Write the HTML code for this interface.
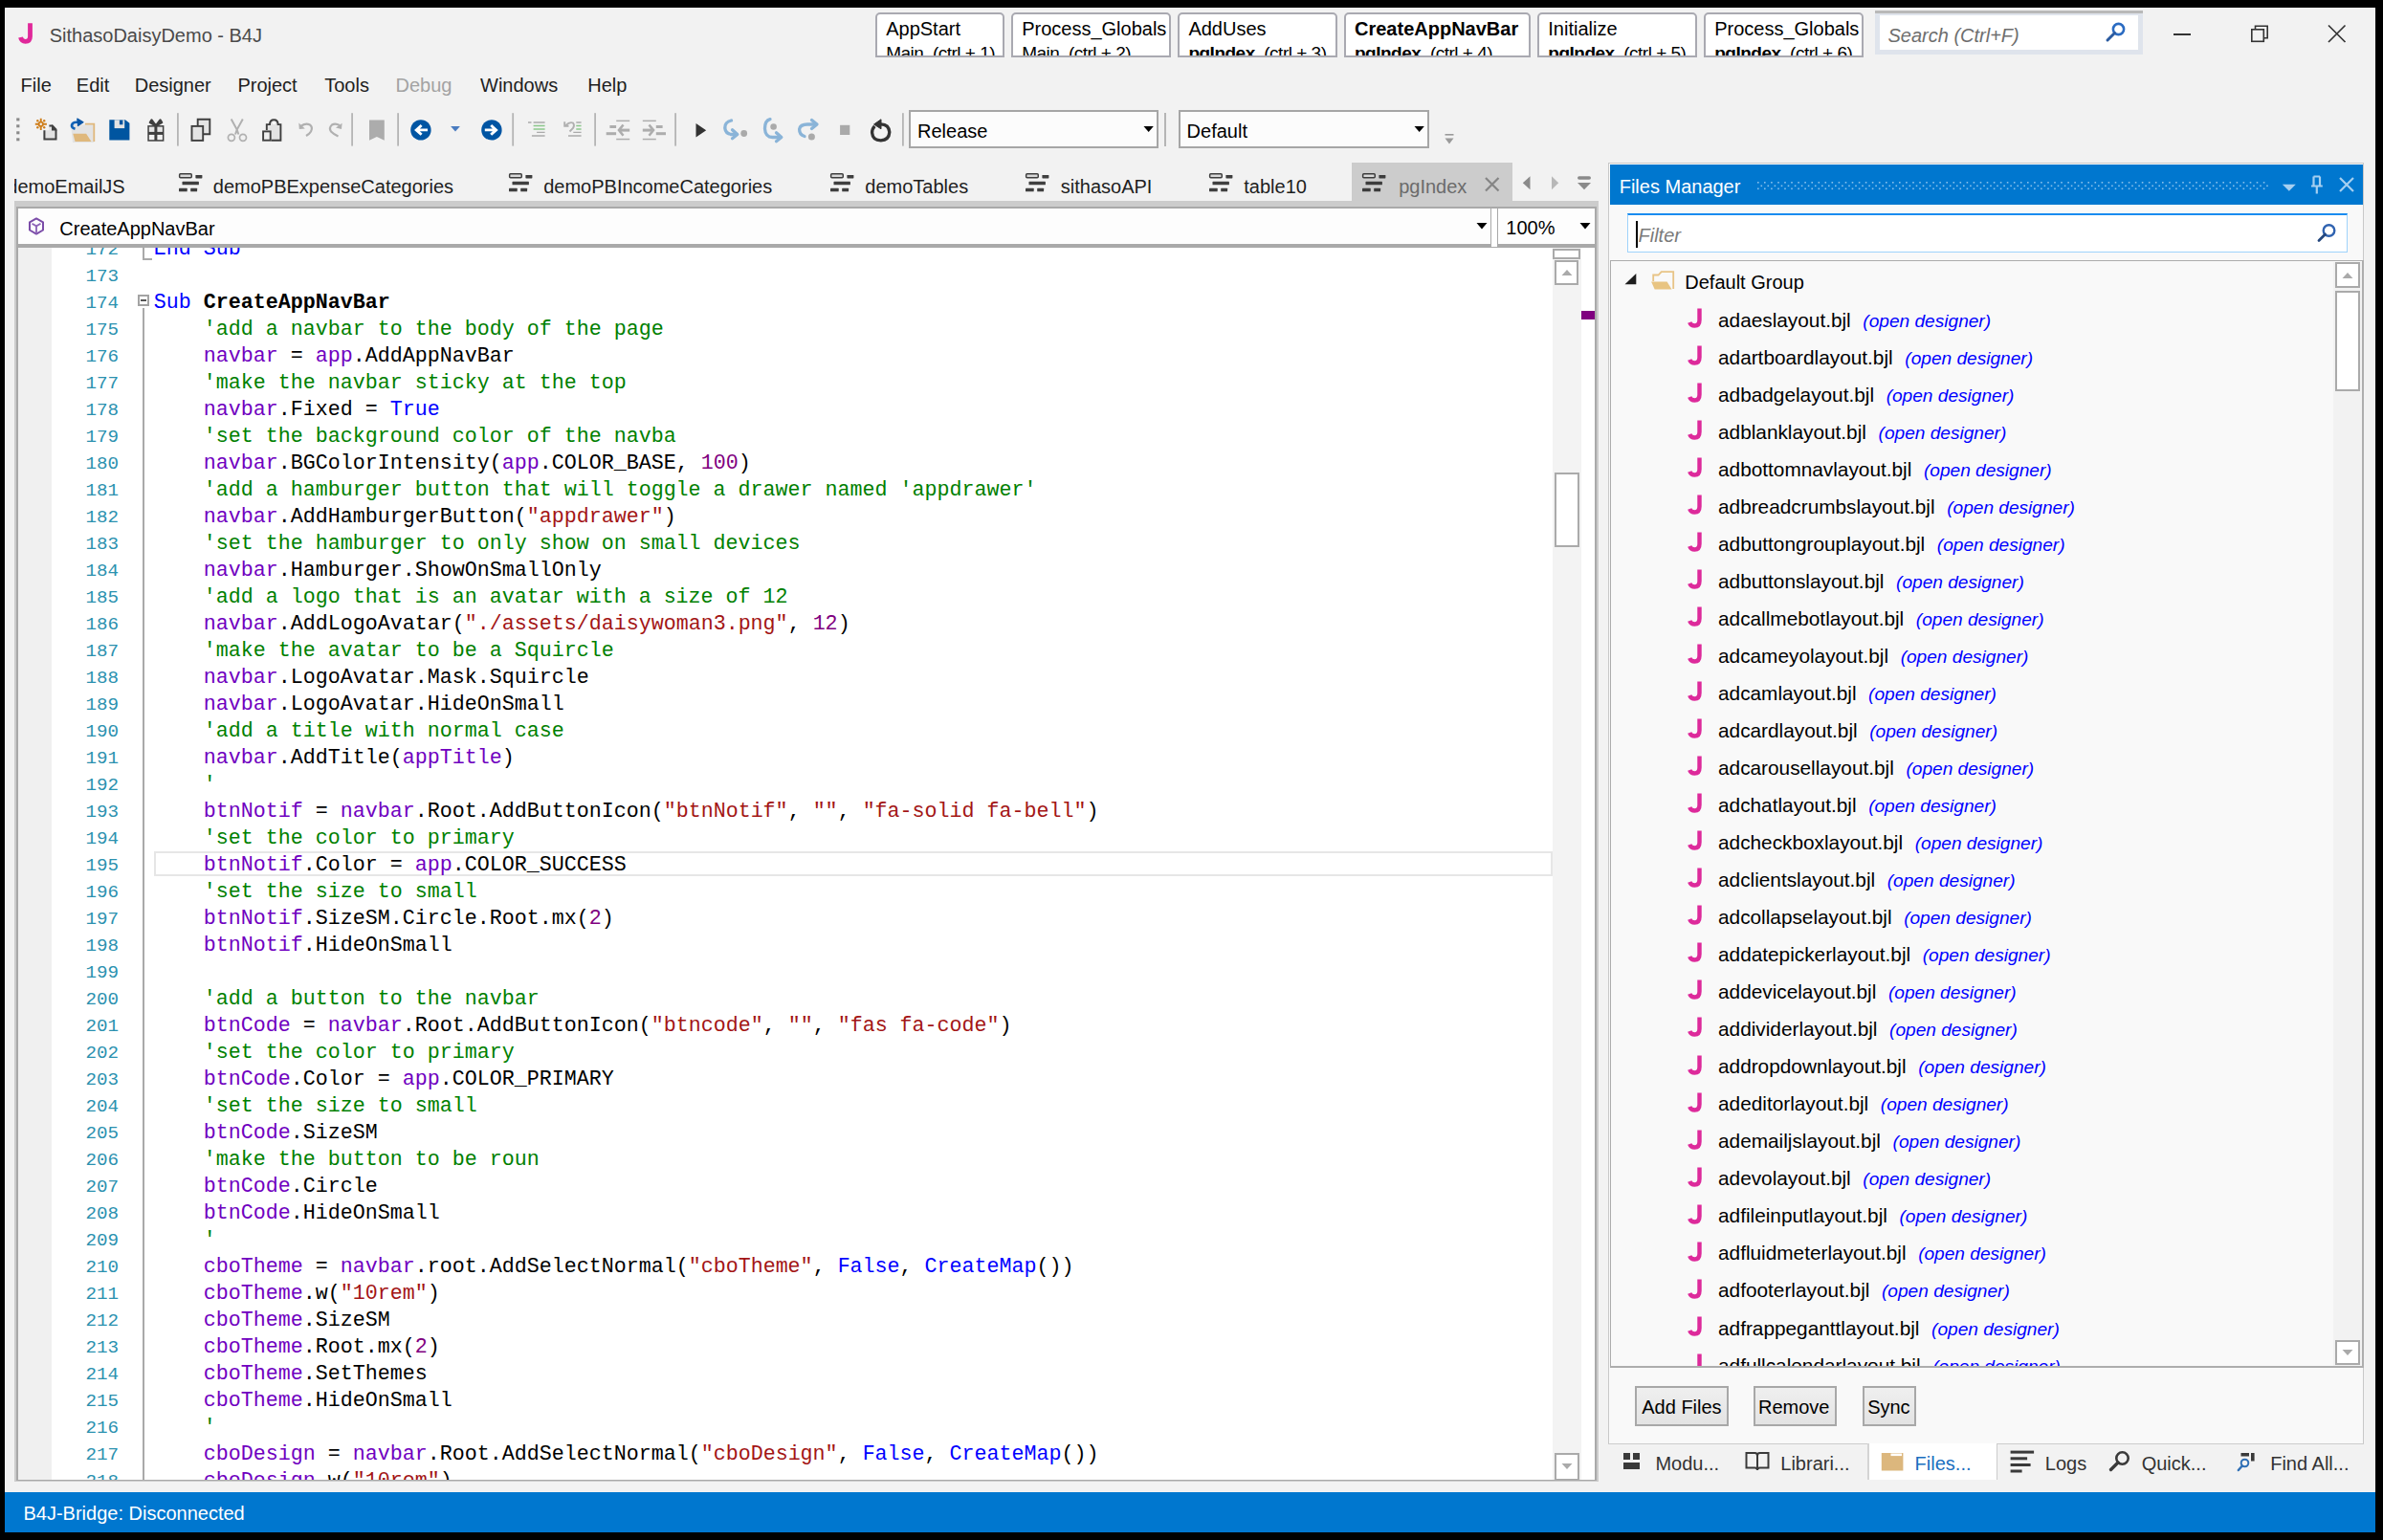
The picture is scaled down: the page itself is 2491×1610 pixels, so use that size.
<!DOCTYPE html>
<html><head><meta charset="utf-8"><title>B4J</title><style>
*{margin:0;padding:0}
html,body{width:2491px;height:1610px;overflow:hidden;background:#000}
body{position:relative;font-family:"Liberation Sans", sans-serif}
.r{position:absolute;display:block}
.t{position:absolute;white-space:nowrap}
.ftab{background:#fff;border:2px solid #a9a9b1;border-radius:5px 5px 0 0;box-sizing:border-box;overflow:hidden}
#win{position:absolute;left:5px;top:8px;width:2478px;height:1594px;background:#f2f2f2;overflow:hidden}
</style></head><body>
<div id="win"></div>
<div class="r" style="left:5px;top:8px;width:2478px;height:1px;background:#fff"></div>
<div class="r" style="left:5px;top:8px;width:1px;height:1552px;background:#fff"></div>
<div class="r" style="left:2482px;top:8px;width:1px;height:1552px;background:#fff"></div>
<svg class="r" style="left:15.00px;top:22.00px;" width="24" height="26" viewBox="15 22 24 26"><path d="M31.5 24.2 V38 Q31.5 43.3 26.5 43.3 Q22.5 43.3 21.5 39" fill="none" stroke="#e0289a" stroke-width="4.8"/></svg>
<div class="t" style="left:51.70px;top:25.17px;font-size:20px;line-height:25.0px;color:#4a4a4a;">SithasoDaisyDemo - B4J</div>
<div class="r ftab" style="left:915.2px;top:12.5px;width:134.4px;height:47px"><div class="t" style="left:9.00px;top:3.77px;font-size:20px;line-height:25.0px;color:#000;">AppStart</div><div class="t" style="left:9.00px;top:29.04px;font-size:19px;line-height:23.75px;color:#000;letter-spacing:-0.5px;">Main&nbsp; (ctrl + 1)</div></div>
<div class="r ftab" style="left:1057.2px;top:12.5px;width:166.8px;height:47px"><div class="t" style="left:9.00px;top:3.77px;font-size:20px;line-height:25.0px;color:#000;">Process_Globals</div><div class="t" style="left:9.00px;top:29.04px;font-size:19px;line-height:23.75px;color:#000;letter-spacing:-0.5px;">Main&nbsp; (ctrl + 2)</div></div>
<div class="r ftab" style="left:1231.4px;top:12.5px;width:166.2px;height:47px"><div class="t" style="left:9.00px;top:3.77px;font-size:20px;line-height:25.0px;color:#000;">AddUses</div><div class="t" style="left:9.00px;top:29.04px;font-size:19px;line-height:23.75px;color:#000;letter-spacing:-0.5px;"><b>pgIndex</b>&nbsp; (ctrl + 3)</div></div>
<div class="r ftab" style="left:1405px;top:12.5px;width:194.8px;height:47px"><div class="t" style="left:9.00px;top:3.77px;font-size:20px;line-height:25.0px;color:#000;font-weight:700;">CreateAppNavBar</div><div class="t" style="left:9.00px;top:29.04px;font-size:19px;line-height:23.75px;color:#000;letter-spacing:-0.5px;"><b>pgIndex</b>&nbsp; (ctrl + 4)</div></div>
<div class="r ftab" style="left:1607.3px;top:12.5px;width:166.4px;height:47px"><div class="t" style="left:9.00px;top:3.77px;font-size:20px;line-height:25.0px;color:#000;">Initialize</div><div class="t" style="left:9.00px;top:29.04px;font-size:19px;line-height:23.75px;color:#000;letter-spacing:-0.5px;"><b>pgIndex</b>&nbsp; (ctrl + 5)</div></div>
<div class="r ftab" style="left:1781.2px;top:12.5px;width:166.4px;height:47px"><div class="t" style="left:9.00px;top:3.77px;font-size:20px;line-height:25.0px;color:#000;">Process_Globals</div><div class="t" style="left:9.00px;top:29.04px;font-size:19px;line-height:23.75px;color:#000;letter-spacing:-0.5px;"><b>pgIndex</b>&nbsp; (ctrl + 6)</div></div>
<div class="r" style="left:1960.00px;top:11.00px;width:280.00px;height:46.00px;background:#dfe4ec;"></div>
<div class="r" style="left:1960.00px;top:11.00px;width:280.00px;height:3.00px;background:#b9b9b9;"></div>
<div class="r" style="left:1965.00px;top:15.70px;width:270.30px;height:36.30px;background:#ffffff;"></div>
<div class="t" style="left:1973.50px;top:24.57px;font-size:20px;line-height:25.0px;color:#6e6e6e;font-style:italic;">Search (Ctrl+F)</div>
<svg class="r" style="left:2199.00px;top:22.00px;" width="26" height="24" viewBox="0 0 26 24"><circle cx="15.5" cy="8.5" r="5.6" fill="none" stroke="#2a6bc2" stroke-width="2.6"/><path d="M11.5 12.5 L4 20" stroke="#2a5aa0" stroke-width="3" stroke-linecap="round"/></svg>
<div class="r" style="left:2271.80px;top:35.00px;width:17.80px;height:1.60px;background:#333;"></div>
<svg class="r" style="left:2350.00px;top:24.00px;" width="24" height="22" viewBox="0 0 24 22"><rect x="3.8" y="6.8" width="12.5" height="12.5" fill="none" stroke="#333" stroke-width="1.6"/><path d="M7.5 6.8 V3.2 H20.2 V15.8 H16.3" fill="none" stroke="#333" stroke-width="1.6"/></svg>
<svg class="r" style="left:2431.00px;top:24.00px;" width="24" height="22" viewBox="0 0 24 22"><path d="M3 2.5 L20.5 20 M20.5 2.5 L3 20" stroke="#333" stroke-width="1.7"/></svg>
<div class="t" style="left:21.60px;top:76.57px;font-size:20px;line-height:25.0px;color:#1e1e1e;">File</div>
<div class="t" style="left:79.80px;top:76.57px;font-size:20px;line-height:25.0px;color:#1e1e1e;">Edit</div>
<div class="t" style="left:140.70px;top:76.57px;font-size:20px;line-height:25.0px;color:#1e1e1e;">Designer</div>
<div class="t" style="left:248.40px;top:76.57px;font-size:20px;line-height:25.0px;color:#1e1e1e;">Project</div>
<div class="t" style="left:339.20px;top:76.57px;font-size:20px;line-height:25.0px;color:#1e1e1e;">Tools</div>
<div class="t" style="left:413.50px;top:76.57px;font-size:20px;line-height:25.0px;color:#a3a3a3;">Debug</div>
<div class="t" style="left:502.00px;top:76.57px;font-size:20px;line-height:25.0px;color:#1e1e1e;">Windows</div>
<div class="t" style="left:614.20px;top:76.57px;font-size:20px;line-height:25.0px;color:#1e1e1e;">Help</div>
<svg class="r" style="left:0;top:110px" width="960" height="50" viewBox="0 110 960 50"><rect x="17.2" y="123.4" width="3.2" height="3" fill="#8a8a8a"/><rect x="17.2" y="130.3" width="3.2" height="3" fill="#8a8a8a"/><rect x="17.2" y="137.3" width="3.2" height="3" fill="#8a8a8a"/><rect x="17.2" y="144.3" width="3.2" height="3" fill="#8a8a8a"/><g stroke="#cf7f1c" stroke-width="1.9" fill="none"><path d="M42.75 123.8 V127.4 M42.75 132.2 V135.9 M36.8 129.8 H40.4 M45.1 129.8 H48.9"/><circle cx="42.75" cy="129.8" r="2.2"/></g><g fill="#cf7f1c"><circle cx="39.3" cy="126.3" r="1.2"/><circle cx="46.2" cy="126.3" r="1.2"/><circle cx="39.3" cy="133.3" r="1.2"/><circle cx="46.2" cy="133.3" r="1.2"/></g><path d="M46.4 136.3 V145.5 H58.5 V136 L54.9 131.4 H51.4 V136.3 Z" fill="#e2e2e2"/><path d="M46.4 136.3 V145.5 H58.5 V136 M51.4 131.4 H54.9" fill="none" stroke="#404040" stroke-width="2"/><path d="M54 130.4 H55.3 L59.5 135 V136.6 H54 Z" fill="#404040"/><path d="M74 130.3 H98.3 V149 H76 Z" fill="#e3e3e3"/><path d="M88.9 129.6 H98.3 V147.9" fill="none" stroke="#e0b87c" stroke-width="1.8"/><path d="M76.3 139.7 H90.1 L95.5 147.9 H78.5 Z" fill="#dfb87c"/><path d="M78.5 134.8 Q74.5 133.5 75 130.8 Q75.8 127.8 80 127.8 H84" fill="none" stroke="#1262b5" stroke-width="2.6"/><path d="M80.8 124 L87 127.8 L81.5 131.5 Z" fill="#0b56a6" stroke="#0b56a6" stroke-width="1.2" stroke-linejoin="round"/><path d="M114.3 125.3 H130.9 L135.4 128.8 V146.4 H114.3 Z" fill="#0055a0"/><rect x="119.6" y="125.3" width="10.6" height="8.8" fill="#e4e4e4"/><rect x="124.9" y="125.6" width="3.5" height="4.7" fill="#0055a0"/><rect x="154.3" y="131.1" width="17.1" height="16.6" fill="#3f3f3f"/><rect x="155.8" y="132.6" width="5.6" height="5.3" fill="#e6e6e6"/><rect x="164.4" y="132.6" width="5.5" height="5.3" fill="#e6e6e6"/><rect x="155.8" y="140.9" width="5.6" height="5.3" fill="#f2f2f2"/><rect x="164.4" y="140.9" width="5.5" height="5.3" fill="#f2f2f2"/><path d="M162.9 131.5 L158.5 125.3 L156.8 128 Z M162.9 131.5 L167.5 125.3 L169.2 128 Z" fill="#3f3f3f" stroke="#3f3f3f" stroke-width="2.2" stroke-linejoin="round"/><rect x="185.0" y="118.2" width="1.8" height="34.4" fill="#b5b5b5"/><rect x="367.2" y="118.2" width="1.8" height="34.4" fill="#b5b5b5"/><rect x="415.2" y="118.2" width="1.8" height="34.4" fill="#b5b5b5"/><rect x="535.3" y="118.2" width="1.8" height="34.4" fill="#b5b5b5"/><rect x="621.2" y="118.2" width="1.8" height="34.4" fill="#b5b5b5"/><rect x="705.2" y="118.2" width="1.8" height="34.4" fill="#b5b5b5"/><rect x="943.0" y="118.2" width="1.8" height="34.4" fill="#b5b5b5"/><rect x="1217.0" y="118.2" width="1.8" height="34.4" fill="#b5b5b5"/><path d="M206.7 131 V124.8 H219.3 V140.2 H213" fill="#e4e4e4" stroke="#3f3f3f" stroke-width="1.9"/><rect x="200.5" y="131.9" width="11.7" height="15" fill="#e4e4e4" stroke="#3f3f3f" stroke-width="1.9"/><path d="M241.7 124.4 L247.7 135.5 L246 140.5 M253.8 124.4 L247.7 135.5 L249.4 140.5" fill="none" stroke="#b0b0b0" stroke-width="2"/><circle cx="241.9" cy="143.8" r="3.5" fill="none" stroke="#b0b0b0" stroke-width="1.7"/><circle cx="254" cy="143.8" r="3.5" fill="none" stroke="#b0b0b0" stroke-width="1.7"/><path d="M278.8 136 V130.1 H282 Q282 125.2 286.3 125.2 Q290.6 125.2 290.6 130.1 H293.4 V146.7 H283.6" fill="#e3e3e3" stroke="#3f3f3f" stroke-width="1.9"/><circle cx="286.3" cy="128.4" r="1.5" fill="#fff"/><rect x="275.1" y="137.4" width="7.6" height="9.3" fill="#eeeeee" stroke="#3f3f3f" stroke-width="1.9"/><path d="M315 131.5 Q319.5 128.5 323.5 130.2 Q327.5 133 325 137.5 Q323.5 140 320 142" fill="none" stroke="#b0b0b0" stroke-width="2.2"/><path d="M312.3 128.6 L312.8 135 L318.8 134.5 Z" fill="#b0b0b0"/><path d="M355 131 Q350.5 128.5 347 130.5 Q343.5 133.5 346 137.5 Q349 140.5 353.5 142.5" fill="none" stroke="#b0b0b0" stroke-width="2.2"/><path d="M357.6 128.8 L357 135 L351 133.5 Z" fill="#b0b0b0"/><path d="M386 125.6 H401.8 V146.7 L393.9 142.9 L386 146.7 Z" fill="#acacac"/><circle cx="439.9" cy="135.9" r="10.7" fill="#0055a3"/><path d="M447 135.9 H435.5 M440.6 131 L435.2 135.9 L440.6 140.8" fill="none" stroke="#fff" stroke-width="2.9"/><path d="M471.1 132.1 H480.9 L476 137.6 Z" fill="#4a7cc0"/><circle cx="513.9" cy="135.9" r="10.7" fill="#0055a3"/><path d="M506.8 135.9 H518.3 M513.2 131 L518.6 135.9 L513.2 140.8" fill="none" stroke="#fff" stroke-width="2.9"/><g stroke-width="1.4"><path d="M552 128 H555.5 M557.6 128 H569.6 M561.1 138.4 H569.6 M555.9 142 H569.6" stroke="#aaaaaa"/><path d="M557.6 131.5 H569.6 M557.6 135 H569.6" stroke="#8cc78c"/></g><g stroke-width="1.4"><path d="M602.3 128 H607.6 M599.3 138.4 H607.6 M594 142 H607.6" stroke="#aaaaaa"/><path d="M602.3 131.5 H607.6 M602.3 135 H607.6" stroke="#8cc78c"/></g><path d="M591.5 131 Q595.5 127 599 128.5 Q601 131 599 134 L595.5 137.5" fill="none" stroke="#b0b0b0" stroke-width="1.9"/><path d="M590.2 127.3 V131.8 H594.5" fill="none" stroke="#b0b0b0" stroke-width="1.9"/><g fill="#adadad"><rect x="644.2" y="125.6" width="14" height="1.5"/><rect x="644.2" y="144.8" width="14" height="1.5"/><rect x="637.4" y="131" width="6.7" height="3"/><rect x="633.7" y="138.2" width="10.4" height="3"/><rect x="648" y="134.6" width="10.2" height="3"/></g><path d="M651.5 130.5 L647 136.1 L651.5 141.7" fill="none" stroke="#adadad" stroke-width="2.6"/><g fill="#adadad"><rect x="671.8" y="125.6" width="14" height="1.5"/><rect x="671.8" y="144.8" width="14" height="1.5"/><rect x="685.8" y="131" width="6.8" height="3"/><rect x="685.8" y="138.2" width="10.2" height="3"/><rect x="671.8" y="134.6" width="10" height="3"/></g><path d="M678.5 130.5 L683 136.1 L678.5 141.7" fill="none" stroke="#adadad" stroke-width="2.6"/><path d="M727.5 128.9 L738.2 136.2 L727.5 143.4 Z" fill="#333"/><path d="M764.5 126 Q757.5 127.5 757.8 134 Q758.5 140.5 766 140.5 H769" fill="none" stroke="#8ab4d8" stroke-width="3.3" stroke-linecap="round" stroke-linejoin="round"/><path d="M765.5 135.8 L770.8 140.5 L765.5 144.8" fill="none" stroke="#8ab4d8" stroke-width="3.3" stroke-linecap="round" stroke-linejoin="round"/><circle cx="777.7" cy="139.5" r="3.4" fill="#aaaaaa"/><path d="M805 124.6 Q799.5 126 799.5 134.5 Q800 143.5 807.5 143.5 H814" fill="none" stroke="#8ab4d8" stroke-width="3.3" stroke-linecap="round" stroke-linejoin="round"/><path d="M811.5 138.8 L816.8 143.5 L811.5 147.8" fill="none" stroke="#8ab4d8" stroke-width="3.3" stroke-linecap="round" stroke-linejoin="round"/><circle cx="808.6" cy="132.5" r="3.3" fill="#aaaaaa"/><path d="M841 142.5 Q835.5 141 835.6 135 Q836.5 130 844 130 H851" fill="none" stroke="#8ab4d8" stroke-width="3.3" stroke-linecap="round" stroke-linejoin="round"/><path d="M848.5 125.5 L854 130 L848.5 134.5" fill="none" stroke="#8ab4d8" stroke-width="3.3" stroke-linecap="round" stroke-linejoin="round"/><circle cx="848.4" cy="142.9" r="3.5" fill="#aaaaaa"/><rect x="878.1" y="130.8" width="10.2" height="10.2" fill="#aaaaaa"/><path d="M914.3 131.8 Q911.5 134.8 911.6 138.8 Q912.3 146.6 920.8 146.8 Q929.3 146.6 929.8 138.2 Q929.3 130 920.8 129.8 H919.5" fill="none" stroke="#333" stroke-width="3.3"/><path d="M921 124.8 L913.5 130 L921 134.8 Z" fill="#333" stroke="#333" stroke-width="1" stroke-linejoin="round"/></svg>
<div class="r" style="left:950.40px;top:115.40px;width:261.00px;height:39.80px;background:#fcfcfc;border:2px solid #a6a6a6;box-sizing:border-box;"></div>
<div class="t" style="left:959.00px;top:125.37px;font-size:20px;line-height:25.0px;color:#000;">Release</div>
<svg class="r" style="left:1195.40px;top:131.00px;" width="12" height="8" viewBox="0 0 12 8"><path d="M0.5 1 H10.8 L5.65 7 Z" fill="#000"/></svg>
<div class="r" style="left:1232.00px;top:115.40px;width:261.60px;height:39.80px;background:#fcfcfc;border:2px solid #a6a6a6;box-sizing:border-box;"></div>
<div class="t" style="left:1240.60px;top:125.37px;font-size:20px;line-height:25.0px;color:#000;">Default</div>
<svg class="r" style="left:1477.60px;top:131.00px;" width="12" height="8" viewBox="0 0 12 8"><path d="M0.5 1 H10.8 L5.65 7 Z" fill="#000"/></svg>
<div class="r" style="left:1217.20px;top:118.20px;width:1.80px;height:34.40px;background:#b5b5b5;"></div>
<svg class="r" style="left:1509.00px;top:139.00px;" width="12" height="14" viewBox="0 0 12 14"><rect x="1.5" y="1" width="9" height="1.6" fill="#9a9a9a"/><path d="M1.5 5.5 H10.5 L6 11.5 Z" fill="#9a9a9a"/></svg>
<div class="r" style="left:15.3px;top:165px;width:160px;height:45px;overflow:hidden"><div class="t" style="left:-8.00px;top:17.87px;font-size:20px;line-height:25.0px;color:#1e1e1e;">demoEmailJS</div></div>
<svg class="r" style="left:185.80px;top:180.30px;" width="28" height="23" viewBox="0 0 28 23"><rect x="1.65" y="1.65" width="12.6" height="4.1" rx="1" fill="#d9d9d9" stroke="#3f3f3f" stroke-width="1.5"/><rect x="18.4" y="2.9" width="7" height="3.5" rx="0.6" fill="#3f3f3f"/><rect x="4.5" y="9.8" width="17.4" height="3.5" rx="0.6" fill="#3f3f3f"/><rect x="1" y="16.7" width="8.7" height="3.6" rx="0.6" fill="#3f3f3f"/><rect x="13.2" y="16.7" width="6.9" height="3.6" rx="0.6" fill="#3f3f3f"/></svg>
<div class="t" style="left:222.80px;top:182.87px;font-size:20px;line-height:25.0px;color:#1e1e1e;">demoPBExpenseCategories</div>
<svg class="r" style="left:530.70px;top:180.30px;" width="28" height="23" viewBox="0 0 28 23"><rect x="1.65" y="1.65" width="12.6" height="4.1" rx="1" fill="#d9d9d9" stroke="#3f3f3f" stroke-width="1.5"/><rect x="18.4" y="2.9" width="7" height="3.5" rx="0.6" fill="#3f3f3f"/><rect x="4.5" y="9.8" width="17.4" height="3.5" rx="0.6" fill="#3f3f3f"/><rect x="1" y="16.7" width="8.7" height="3.6" rx="0.6" fill="#3f3f3f"/><rect x="13.2" y="16.7" width="6.9" height="3.6" rx="0.6" fill="#3f3f3f"/></svg>
<div class="t" style="left:568.20px;top:182.87px;font-size:20px;line-height:25.0px;color:#1e1e1e;">demoPBIncomeCategories</div>
<svg class="r" style="left:866.50px;top:180.30px;" width="28" height="23" viewBox="0 0 28 23"><rect x="1.65" y="1.65" width="12.6" height="4.1" rx="1" fill="#d9d9d9" stroke="#3f3f3f" stroke-width="1.5"/><rect x="18.4" y="2.9" width="7" height="3.5" rx="0.6" fill="#3f3f3f"/><rect x="4.5" y="9.8" width="17.4" height="3.5" rx="0.6" fill="#3f3f3f"/><rect x="1" y="16.7" width="8.7" height="3.6" rx="0.6" fill="#3f3f3f"/><rect x="13.2" y="16.7" width="6.9" height="3.6" rx="0.6" fill="#3f3f3f"/></svg>
<div class="t" style="left:904.30px;top:182.87px;font-size:20px;line-height:25.0px;color:#1e1e1e;">demoTables</div>
<svg class="r" style="left:1071.00px;top:180.30px;" width="28" height="23" viewBox="0 0 28 23"><rect x="1.65" y="1.65" width="12.6" height="4.1" rx="1" fill="#d9d9d9" stroke="#3f3f3f" stroke-width="1.5"/><rect x="18.4" y="2.9" width="7" height="3.5" rx="0.6" fill="#3f3f3f"/><rect x="4.5" y="9.8" width="17.4" height="3.5" rx="0.6" fill="#3f3f3f"/><rect x="1" y="16.7" width="8.7" height="3.6" rx="0.6" fill="#3f3f3f"/><rect x="13.2" y="16.7" width="6.9" height="3.6" rx="0.6" fill="#3f3f3f"/></svg>
<div class="t" style="left:1108.80px;top:182.87px;font-size:20px;line-height:25.0px;color:#1e1e1e;">sithasoAPI</div>
<svg class="r" style="left:1262.50px;top:180.30px;" width="28" height="23" viewBox="0 0 28 23"><rect x="1.65" y="1.65" width="12.6" height="4.1" rx="1" fill="#d9d9d9" stroke="#3f3f3f" stroke-width="1.5"/><rect x="18.4" y="2.9" width="7" height="3.5" rx="0.6" fill="#3f3f3f"/><rect x="4.5" y="9.8" width="17.4" height="3.5" rx="0.6" fill="#3f3f3f"/><rect x="1" y="16.7" width="8.7" height="3.6" rx="0.6" fill="#3f3f3f"/><rect x="13.2" y="16.7" width="6.9" height="3.6" rx="0.6" fill="#3f3f3f"/></svg>
<div class="t" style="left:1300.30px;top:182.87px;font-size:20px;line-height:25.0px;color:#1e1e1e;">table10</div>
<div class="r" style="left:1413.00px;top:170.00px;width:167.60px;height:40.50px;background:#cccccc;"></div>
<svg class="r" style="left:1423.00px;top:180.30px;" width="28" height="23" viewBox="0 0 28 23"><rect x="1.65" y="1.65" width="12.6" height="4.1" rx="1" fill="#d9d9d9" stroke="#3c3c3c" stroke-width="1.5"/><rect x="18.4" y="2.9" width="7" height="3.5" rx="0.6" fill="#3c3c3c"/><rect x="4.5" y="9.8" width="17.4" height="3.5" rx="0.6" fill="#3c3c3c"/><rect x="1" y="16.7" width="8.7" height="3.6" rx="0.6" fill="#3c3c3c"/><rect x="13.2" y="16.7" width="6.9" height="3.6" rx="0.6" fill="#3c3c3c"/></svg>
<div class="t" style="left:1462.20px;top:182.87px;font-size:20px;line-height:25.0px;color:#6b6b6b;">pgIndex</div>
<svg class="r" style="left:1551.00px;top:184.00px;" width="18" height="18" viewBox="0 0 18 18"><path d="M2 2 L15.5 15.5 M15.5 2 L2 15.5" stroke="#858585" stroke-width="2.2"/></svg>
<svg class="r" style="left:1590.00px;top:183.00px;" width="12" height="17" viewBox="0 0 12 17"><path d="M9.5 1.3 V15.3 L1.8 8.3 Z" fill="#8a8a8a"/></svg>
<svg class="r" style="left:1620.00px;top:183.00px;" width="12" height="17" viewBox="0 0 12 17"><path d="M2 1.3 V15.3 L9.2 8.3 Z" fill="#b8b8b8"/></svg>
<svg class="r" style="left:1647.00px;top:182.00px;" width="18" height="18" viewBox="0 0 18 18"><rect x="2" y="2.2" width="14" height="3.6" rx="1.8" fill="#8a8a8a"/><path d="M2 9 H16 L9 16.3 Z" fill="#8a8a8a"/></svg>
<div class="r" style="left:15.00px;top:210.00px;width:1656.00px;height:1339.00px;background:#cccccc;"></div>
<div class="r" style="left:17.10px;top:216.40px;width:1651.60px;height:1331.60px;background:#a9a9a9;"></div>
<div class="r" style="left:19.00px;top:218.00px;width:1538.50px;height:37.00px;background:#fdfdfd;"></div>
<div class="r" style="left:1559.20px;top:218.00px;width:6.30px;height:40.40px;background:#ffffff;"></div>
<div class="r" style="left:1565.80px;top:218.00px;width:101.20px;height:37.00px;background:#fdfdfd;"></div>
<svg class="r" style="left:28.00px;top:226.00px;" width="20" height="21" viewBox="0 0 20 21"><path d="M10 2.4 L17 6.3 V14.5 L10 18.6 L3 14.5 V6.3 Z" fill="none" stroke="#7b4ca8" stroke-width="2" stroke-linejoin="round"/><path d="M5.5 7.8 L10 10.4 L14.5 7.8 M10 10.4 V18.2" fill="none" stroke="#8f66b8" stroke-width="1.9"/></svg>
<div class="t" style="left:62.30px;top:227.37px;font-size:20px;line-height:25.0px;color:#000;">CreateAppNavBar</div>
<svg class="r" style="left:1543.00px;top:232.00px;" width="14" height="9" viewBox="0 0 14 9"><path d="M0.5 1 H11.5 L6 7.5 Z" fill="#000"/></svg>
<div class="t" style="left:1574.30px;top:226.47px;font-size:20px;line-height:25.0px;color:#000;">100%</div>
<svg class="r" style="left:1651.00px;top:232.00px;" width="14" height="9" viewBox="0 0 14 9"><path d="M0.5 1 H11.5 L6 7.5 Z" fill="#000"/></svg>
<div class="r" style="left:18.8px;top:258.8px;width:1648.2px;height:1287.9px;background:#fff;overflow:hidden">
<div class="r" style="left:0.00px;top:0.00px;width:35.20px;height:1300.00px;background:#f0f0f0;"></div>
<div class="r" style="left:130.20px;top:0.00px;width:1.70px;height:1300.00px;background:#a9a9a9;"></div>
<div class="r" style="left:130.20px;top:11.60px;width:10.00px;height:1.60px;background:#a9a9a9;"></div>
<div class="r" style="left:128.20px;top:13.20px;width:6.00px;height:37.00px;background:#ffffff;"></div>
<div class="r" style="left:128.20px;top:60.20px;width:6.00px;height:3.00px;background:#ffffff;"></div>
<div class="r" style="left:125.20px;top:49.20px;width:11.80px;height:11.80px;background:#fff;border:2px solid #a3a3a3;box-sizing:border-box;"></div>
<div class="r" style="left:128.30px;top:54.40px;width:5.60px;height:1.80px;background:#555;"></div>
<div class="r" style="left:142.60px;top:631.60px;width:1461.60px;height:25.80px;border:2px solid #e6e6e6;box-sizing:border-box;"></div>
<div class="t" style="left:70.64px;top:-10.21px;font-size:19.2px;line-height:24.0px;color:#2b91af;font-family:'Liberation Mono', monospace;">172</div>
<div class="t" style="left:142.00px;top:-11.61px;font-size:21.67px;line-height:27.09px;color:#000;font-family:'Liberation Mono', monospace;white-space:pre;"><span style="color:#0000ff">End Sub</span></div>
<div class="t" style="left:70.64px;top:17.79px;font-size:19.2px;line-height:24.0px;color:#2b91af;font-family:'Liberation Mono', monospace;">173</div>
<div class="t" style="left:70.64px;top:45.79px;font-size:19.2px;line-height:24.0px;color:#2b91af;font-family:'Liberation Mono', monospace;">174</div>
<div class="t" style="left:142.00px;top:44.39px;font-size:21.67px;line-height:27.09px;color:#000;font-family:'Liberation Mono', monospace;white-space:pre;"><span style="color:#0000ff">Sub </span><b style="color:#000">CreateAppNavBar</b></div>
<div class="t" style="left:70.64px;top:73.79px;font-size:19.2px;line-height:24.0px;color:#2b91af;font-family:'Liberation Mono', monospace;">175</div>
<div class="t" style="left:142.00px;top:72.39px;font-size:21.67px;line-height:27.09px;color:#000;font-family:'Liberation Mono', monospace;white-space:pre;"><span style="color:#008000">    'add a navbar to the body of the page</span></div>
<div class="t" style="left:70.64px;top:101.79px;font-size:19.2px;line-height:24.0px;color:#2b91af;font-family:'Liberation Mono', monospace;">176</div>
<div class="t" style="left:142.00px;top:100.39px;font-size:21.67px;line-height:27.09px;color:#000;font-family:'Liberation Mono', monospace;white-space:pre;"><span style="color:#000000">    </span><span style="color:#7000c0">navbar</span><span style="color:#000000"> = </span><span style="color:#7000c0">app</span><span style="color:#000000">.AddAppNavBar</span></div>
<div class="t" style="left:70.64px;top:129.79px;font-size:19.2px;line-height:24.0px;color:#2b91af;font-family:'Liberation Mono', monospace;">177</div>
<div class="t" style="left:142.00px;top:128.39px;font-size:21.67px;line-height:27.09px;color:#000;font-family:'Liberation Mono', monospace;white-space:pre;"><span style="color:#008000">    'make the navbar sticky at the top</span></div>
<div class="t" style="left:70.64px;top:157.79px;font-size:19.2px;line-height:24.0px;color:#2b91af;font-family:'Liberation Mono', monospace;">178</div>
<div class="t" style="left:142.00px;top:156.39px;font-size:21.67px;line-height:27.09px;color:#000;font-family:'Liberation Mono', monospace;white-space:pre;"><span style="color:#000000">    </span><span style="color:#7000c0">navbar</span><span style="color:#000000">.Fixed = </span><span style="color:#0000ff">True</span></div>
<div class="t" style="left:70.64px;top:185.79px;font-size:19.2px;line-height:24.0px;color:#2b91af;font-family:'Liberation Mono', monospace;">179</div>
<div class="t" style="left:142.00px;top:184.39px;font-size:21.67px;line-height:27.09px;color:#000;font-family:'Liberation Mono', monospace;white-space:pre;"><span style="color:#008000">    'set the background color of the navba</span></div>
<div class="t" style="left:70.64px;top:213.79px;font-size:19.2px;line-height:24.0px;color:#2b91af;font-family:'Liberation Mono', monospace;">180</div>
<div class="t" style="left:142.00px;top:212.39px;font-size:21.67px;line-height:27.09px;color:#000;font-family:'Liberation Mono', monospace;white-space:pre;"><span style="color:#000000">    </span><span style="color:#7000c0">navbar</span><span style="color:#000000">.BGColorIntensity(</span><span style="color:#7000c0">app</span><span style="color:#000000">.COLOR_BASE, </span><span style="color:#800080">100</span><span style="color:#000000">)</span></div>
<div class="t" style="left:70.64px;top:241.79px;font-size:19.2px;line-height:24.0px;color:#2b91af;font-family:'Liberation Mono', monospace;">181</div>
<div class="t" style="left:142.00px;top:240.39px;font-size:21.67px;line-height:27.09px;color:#000;font-family:'Liberation Mono', monospace;white-space:pre;"><span style="color:#008000">    'add a hamburger button that will toggle a drawer named 'appdrawer'</span></div>
<div class="t" style="left:70.64px;top:269.79px;font-size:19.2px;line-height:24.0px;color:#2b91af;font-family:'Liberation Mono', monospace;">182</div>
<div class="t" style="left:142.00px;top:268.39px;font-size:21.67px;line-height:27.09px;color:#000;font-family:'Liberation Mono', monospace;white-space:pre;"><span style="color:#000000">    </span><span style="color:#7000c0">navbar</span><span style="color:#000000">.AddHamburgerButton(</span><span style="color:#a31515">"appdrawer"</span><span style="color:#000000">)</span></div>
<div class="t" style="left:70.64px;top:297.79px;font-size:19.2px;line-height:24.0px;color:#2b91af;font-family:'Liberation Mono', monospace;">183</div>
<div class="t" style="left:142.00px;top:296.39px;font-size:21.67px;line-height:27.09px;color:#000;font-family:'Liberation Mono', monospace;white-space:pre;"><span style="color:#008000">    'set the hamburger to only show on small devices</span></div>
<div class="t" style="left:70.64px;top:325.79px;font-size:19.2px;line-height:24.0px;color:#2b91af;font-family:'Liberation Mono', monospace;">184</div>
<div class="t" style="left:142.00px;top:324.39px;font-size:21.67px;line-height:27.09px;color:#000;font-family:'Liberation Mono', monospace;white-space:pre;"><span style="color:#000000">    </span><span style="color:#7000c0">navbar</span><span style="color:#000000">.Hamburger.ShowOnSmallOnly</span></div>
<div class="t" style="left:70.64px;top:353.79px;font-size:19.2px;line-height:24.0px;color:#2b91af;font-family:'Liberation Mono', monospace;">185</div>
<div class="t" style="left:142.00px;top:352.39px;font-size:21.67px;line-height:27.09px;color:#000;font-family:'Liberation Mono', monospace;white-space:pre;"><span style="color:#008000">    'add a logo that is an avatar with a size of 12</span></div>
<div class="t" style="left:70.64px;top:381.79px;font-size:19.2px;line-height:24.0px;color:#2b91af;font-family:'Liberation Mono', monospace;">186</div>
<div class="t" style="left:142.00px;top:380.39px;font-size:21.67px;line-height:27.09px;color:#000;font-family:'Liberation Mono', monospace;white-space:pre;"><span style="color:#000000">    </span><span style="color:#7000c0">navbar</span><span style="color:#000000">.AddLogoAvatar(</span><span style="color:#a31515">"./assets/daisywoman3.png"</span><span style="color:#000000">, </span><span style="color:#800080">12</span><span style="color:#000000">)</span></div>
<div class="t" style="left:70.64px;top:409.79px;font-size:19.2px;line-height:24.0px;color:#2b91af;font-family:'Liberation Mono', monospace;">187</div>
<div class="t" style="left:142.00px;top:408.39px;font-size:21.67px;line-height:27.09px;color:#000;font-family:'Liberation Mono', monospace;white-space:pre;"><span style="color:#008000">    'make the avatar to be a Squircle</span></div>
<div class="t" style="left:70.64px;top:437.79px;font-size:19.2px;line-height:24.0px;color:#2b91af;font-family:'Liberation Mono', monospace;">188</div>
<div class="t" style="left:142.00px;top:436.39px;font-size:21.67px;line-height:27.09px;color:#000;font-family:'Liberation Mono', monospace;white-space:pre;"><span style="color:#000000">    </span><span style="color:#7000c0">navbar</span><span style="color:#000000">.LogoAvatar.Mask.Squircle</span></div>
<div class="t" style="left:70.64px;top:465.79px;font-size:19.2px;line-height:24.0px;color:#2b91af;font-family:'Liberation Mono', monospace;">189</div>
<div class="t" style="left:142.00px;top:464.39px;font-size:21.67px;line-height:27.09px;color:#000;font-family:'Liberation Mono', monospace;white-space:pre;"><span style="color:#000000">    </span><span style="color:#7000c0">navbar</span><span style="color:#000000">.LogoAvatar.HideOnSmall</span></div>
<div class="t" style="left:70.64px;top:493.79px;font-size:19.2px;line-height:24.0px;color:#2b91af;font-family:'Liberation Mono', monospace;">190</div>
<div class="t" style="left:142.00px;top:492.39px;font-size:21.67px;line-height:27.09px;color:#000;font-family:'Liberation Mono', monospace;white-space:pre;"><span style="color:#008000">    'add a title with normal case</span></div>
<div class="t" style="left:70.64px;top:521.79px;font-size:19.2px;line-height:24.0px;color:#2b91af;font-family:'Liberation Mono', monospace;">191</div>
<div class="t" style="left:142.00px;top:520.39px;font-size:21.67px;line-height:27.09px;color:#000;font-family:'Liberation Mono', monospace;white-space:pre;"><span style="color:#000000">    </span><span style="color:#7000c0">navbar</span><span style="color:#000000">.AddTitle(</span><span style="color:#7000c0">appTitle</span><span style="color:#000000">)</span></div>
<div class="t" style="left:70.64px;top:549.79px;font-size:19.2px;line-height:24.0px;color:#2b91af;font-family:'Liberation Mono', monospace;">192</div>
<div class="t" style="left:142.00px;top:548.39px;font-size:21.67px;line-height:27.09px;color:#000;font-family:'Liberation Mono', monospace;white-space:pre;"><span style="color:#008000">    '</span></div>
<div class="t" style="left:70.64px;top:577.79px;font-size:19.2px;line-height:24.0px;color:#2b91af;font-family:'Liberation Mono', monospace;">193</div>
<div class="t" style="left:142.00px;top:576.39px;font-size:21.67px;line-height:27.09px;color:#000;font-family:'Liberation Mono', monospace;white-space:pre;"><span style="color:#000000">    </span><span style="color:#7000c0">btnNotif</span><span style="color:#000000"> = </span><span style="color:#7000c0">navbar</span><span style="color:#000000">.Root.AddButtonIcon(</span><span style="color:#a31515">"btnNotif"</span><span style="color:#000000">, </span><span style="color:#a31515">""</span><span style="color:#000000">, </span><span style="color:#a31515">"fa-solid fa-bell"</span><span style="color:#000000">)</span></div>
<div class="t" style="left:70.64px;top:605.79px;font-size:19.2px;line-height:24.0px;color:#2b91af;font-family:'Liberation Mono', monospace;">194</div>
<div class="t" style="left:142.00px;top:604.39px;font-size:21.67px;line-height:27.09px;color:#000;font-family:'Liberation Mono', monospace;white-space:pre;"><span style="color:#008000">    'set the color to primary</span></div>
<div class="t" style="left:70.64px;top:633.79px;font-size:19.2px;line-height:24.0px;color:#2b91af;font-family:'Liberation Mono', monospace;">195</div>
<div class="t" style="left:142.00px;top:632.39px;font-size:21.67px;line-height:27.09px;color:#000;font-family:'Liberation Mono', monospace;white-space:pre;"><span style="color:#000000">    </span><span style="color:#7000c0">btnNotif</span><span style="color:#000000">.Color = </span><span style="color:#7000c0">app</span><span style="color:#000000">.COLOR_SUCCESS</span></div>
<div class="t" style="left:70.64px;top:661.79px;font-size:19.2px;line-height:24.0px;color:#2b91af;font-family:'Liberation Mono', monospace;">196</div>
<div class="t" style="left:142.00px;top:660.39px;font-size:21.67px;line-height:27.09px;color:#000;font-family:'Liberation Mono', monospace;white-space:pre;"><span style="color:#008000">    'set the size to small</span></div>
<div class="t" style="left:70.64px;top:689.79px;font-size:19.2px;line-height:24.0px;color:#2b91af;font-family:'Liberation Mono', monospace;">197</div>
<div class="t" style="left:142.00px;top:688.39px;font-size:21.67px;line-height:27.09px;color:#000;font-family:'Liberation Mono', monospace;white-space:pre;"><span style="color:#000000">    </span><span style="color:#7000c0">btnNotif</span><span style="color:#000000">.SizeSM.Circle.Root.mx(</span><span style="color:#800080">2</span><span style="color:#000000">)</span></div>
<div class="t" style="left:70.64px;top:717.79px;font-size:19.2px;line-height:24.0px;color:#2b91af;font-family:'Liberation Mono', monospace;">198</div>
<div class="t" style="left:142.00px;top:716.39px;font-size:21.67px;line-height:27.09px;color:#000;font-family:'Liberation Mono', monospace;white-space:pre;"><span style="color:#000000">    </span><span style="color:#7000c0">btnNotif</span><span style="color:#000000">.HideOnSmall</span></div>
<div class="t" style="left:70.64px;top:745.79px;font-size:19.2px;line-height:24.0px;color:#2b91af;font-family:'Liberation Mono', monospace;">199</div>
<div class="t" style="left:70.64px;top:773.79px;font-size:19.2px;line-height:24.0px;color:#2b91af;font-family:'Liberation Mono', monospace;">200</div>
<div class="t" style="left:142.00px;top:772.39px;font-size:21.67px;line-height:27.09px;color:#000;font-family:'Liberation Mono', monospace;white-space:pre;"><span style="color:#008000">    'add a button to the navbar</span></div>
<div class="t" style="left:70.64px;top:801.79px;font-size:19.2px;line-height:24.0px;color:#2b91af;font-family:'Liberation Mono', monospace;">201</div>
<div class="t" style="left:142.00px;top:800.39px;font-size:21.67px;line-height:27.09px;color:#000;font-family:'Liberation Mono', monospace;white-space:pre;"><span style="color:#000000">    </span><span style="color:#7000c0">btnCode</span><span style="color:#000000"> = </span><span style="color:#7000c0">navbar</span><span style="color:#000000">.Root.AddButtonIcon(</span><span style="color:#a31515">"btncode"</span><span style="color:#000000">, </span><span style="color:#a31515">""</span><span style="color:#000000">, </span><span style="color:#a31515">"fas fa-code"</span><span style="color:#000000">)</span></div>
<div class="t" style="left:70.64px;top:829.79px;font-size:19.2px;line-height:24.0px;color:#2b91af;font-family:'Liberation Mono', monospace;">202</div>
<div class="t" style="left:142.00px;top:828.39px;font-size:21.67px;line-height:27.09px;color:#000;font-family:'Liberation Mono', monospace;white-space:pre;"><span style="color:#008000">    'set the color to primary</span></div>
<div class="t" style="left:70.64px;top:857.79px;font-size:19.2px;line-height:24.0px;color:#2b91af;font-family:'Liberation Mono', monospace;">203</div>
<div class="t" style="left:142.00px;top:856.39px;font-size:21.67px;line-height:27.09px;color:#000;font-family:'Liberation Mono', monospace;white-space:pre;"><span style="color:#000000">    </span><span style="color:#7000c0">btnCode</span><span style="color:#000000">.Color = </span><span style="color:#7000c0">app</span><span style="color:#000000">.COLOR_PRIMARY</span></div>
<div class="t" style="left:70.64px;top:885.79px;font-size:19.2px;line-height:24.0px;color:#2b91af;font-family:'Liberation Mono', monospace;">204</div>
<div class="t" style="left:142.00px;top:884.39px;font-size:21.67px;line-height:27.09px;color:#000;font-family:'Liberation Mono', monospace;white-space:pre;"><span style="color:#008000">    'set the size to small</span></div>
<div class="t" style="left:70.64px;top:913.79px;font-size:19.2px;line-height:24.0px;color:#2b91af;font-family:'Liberation Mono', monospace;">205</div>
<div class="t" style="left:142.00px;top:912.39px;font-size:21.67px;line-height:27.09px;color:#000;font-family:'Liberation Mono', monospace;white-space:pre;"><span style="color:#000000">    </span><span style="color:#7000c0">btnCode</span><span style="color:#000000">.SizeSM</span></div>
<div class="t" style="left:70.64px;top:941.79px;font-size:19.2px;line-height:24.0px;color:#2b91af;font-family:'Liberation Mono', monospace;">206</div>
<div class="t" style="left:142.00px;top:940.39px;font-size:21.67px;line-height:27.09px;color:#000;font-family:'Liberation Mono', monospace;white-space:pre;"><span style="color:#008000">    'make the button to be roun</span></div>
<div class="t" style="left:70.64px;top:969.79px;font-size:19.2px;line-height:24.0px;color:#2b91af;font-family:'Liberation Mono', monospace;">207</div>
<div class="t" style="left:142.00px;top:968.39px;font-size:21.67px;line-height:27.09px;color:#000;font-family:'Liberation Mono', monospace;white-space:pre;"><span style="color:#000000">    </span><span style="color:#7000c0">btnCode</span><span style="color:#000000">.Circle</span></div>
<div class="t" style="left:70.64px;top:997.79px;font-size:19.2px;line-height:24.0px;color:#2b91af;font-family:'Liberation Mono', monospace;">208</div>
<div class="t" style="left:142.00px;top:996.39px;font-size:21.67px;line-height:27.09px;color:#000;font-family:'Liberation Mono', monospace;white-space:pre;"><span style="color:#000000">    </span><span style="color:#7000c0">btnCode</span><span style="color:#000000">.HideOnSmall</span></div>
<div class="t" style="left:70.64px;top:1025.79px;font-size:19.2px;line-height:24.0px;color:#2b91af;font-family:'Liberation Mono', monospace;">209</div>
<div class="t" style="left:142.00px;top:1024.39px;font-size:21.67px;line-height:27.09px;color:#000;font-family:'Liberation Mono', monospace;white-space:pre;"><span style="color:#008000">    '</span></div>
<div class="t" style="left:70.64px;top:1053.79px;font-size:19.2px;line-height:24.0px;color:#2b91af;font-family:'Liberation Mono', monospace;">210</div>
<div class="t" style="left:142.00px;top:1052.39px;font-size:21.67px;line-height:27.09px;color:#000;font-family:'Liberation Mono', monospace;white-space:pre;"><span style="color:#000000">    </span><span style="color:#7000c0">cboTheme</span><span style="color:#000000"> = </span><span style="color:#7000c0">navbar</span><span style="color:#000000">.root.AddSelectNormal(</span><span style="color:#a31515">"cboTheme"</span><span style="color:#000000">, </span><span style="color:#0000ff">False</span><span style="color:#000000">, </span><span style="color:#0000ff">CreateMap</span><span style="color:#000000">())</span></div>
<div class="t" style="left:70.64px;top:1081.79px;font-size:19.2px;line-height:24.0px;color:#2b91af;font-family:'Liberation Mono', monospace;">211</div>
<div class="t" style="left:142.00px;top:1080.39px;font-size:21.67px;line-height:27.09px;color:#000;font-family:'Liberation Mono', monospace;white-space:pre;"><span style="color:#000000">    </span><span style="color:#7000c0">cboTheme</span><span style="color:#000000">.w(</span><span style="color:#a31515">"10rem"</span><span style="color:#000000">)</span></div>
<div class="t" style="left:70.64px;top:1109.79px;font-size:19.2px;line-height:24.0px;color:#2b91af;font-family:'Liberation Mono', monospace;">212</div>
<div class="t" style="left:142.00px;top:1108.39px;font-size:21.67px;line-height:27.09px;color:#000;font-family:'Liberation Mono', monospace;white-space:pre;"><span style="color:#000000">    </span><span style="color:#7000c0">cboTheme</span><span style="color:#000000">.SizeSM</span></div>
<div class="t" style="left:70.64px;top:1137.79px;font-size:19.2px;line-height:24.0px;color:#2b91af;font-family:'Liberation Mono', monospace;">213</div>
<div class="t" style="left:142.00px;top:1136.39px;font-size:21.67px;line-height:27.09px;color:#000;font-family:'Liberation Mono', monospace;white-space:pre;"><span style="color:#000000">    </span><span style="color:#7000c0">cboTheme</span><span style="color:#000000">.Root.mx(</span><span style="color:#800080">2</span><span style="color:#000000">)</span></div>
<div class="t" style="left:70.64px;top:1165.79px;font-size:19.2px;line-height:24.0px;color:#2b91af;font-family:'Liberation Mono', monospace;">214</div>
<div class="t" style="left:142.00px;top:1164.39px;font-size:21.67px;line-height:27.09px;color:#000;font-family:'Liberation Mono', monospace;white-space:pre;"><span style="color:#000000">    </span><span style="color:#7000c0">cboTheme</span><span style="color:#000000">.SetThemes</span></div>
<div class="t" style="left:70.64px;top:1193.79px;font-size:19.2px;line-height:24.0px;color:#2b91af;font-family:'Liberation Mono', monospace;">215</div>
<div class="t" style="left:142.00px;top:1192.39px;font-size:21.67px;line-height:27.09px;color:#000;font-family:'Liberation Mono', monospace;white-space:pre;"><span style="color:#000000">    </span><span style="color:#7000c0">cboTheme</span><span style="color:#000000">.HideOnSmall</span></div>
<div class="t" style="left:70.64px;top:1221.79px;font-size:19.2px;line-height:24.0px;color:#2b91af;font-family:'Liberation Mono', monospace;">216</div>
<div class="t" style="left:142.00px;top:1220.39px;font-size:21.67px;line-height:27.09px;color:#000;font-family:'Liberation Mono', monospace;white-space:pre;"><span style="color:#008000">    '</span></div>
<div class="t" style="left:70.64px;top:1249.79px;font-size:19.2px;line-height:24.0px;color:#2b91af;font-family:'Liberation Mono', monospace;">217</div>
<div class="t" style="left:142.00px;top:1248.39px;font-size:21.67px;line-height:27.09px;color:#000;font-family:'Liberation Mono', monospace;white-space:pre;"><span style="color:#000000">    </span><span style="color:#7000c0">cboDesign</span><span style="color:#000000"> = </span><span style="color:#7000c0">navbar</span><span style="color:#000000">.Root.AddSelectNormal(</span><span style="color:#a31515">"cboDesign"</span><span style="color:#000000">, </span><span style="color:#0000ff">False</span><span style="color:#000000">, </span><span style="color:#0000ff">CreateMap</span><span style="color:#000000">())</span></div>
<div class="t" style="left:70.64px;top:1277.79px;font-size:19.2px;line-height:24.0px;color:#2b91af;font-family:'Liberation Mono', monospace;">218</div>
<div class="t" style="left:142.00px;top:1276.39px;font-size:21.67px;line-height:27.09px;color:#000;font-family:'Liberation Mono', monospace;white-space:pre;"><span style="color:#000000">    </span><span style="color:#7000c0">cboDesign</span><span style="color:#000000">.w(</span><span style="color:#a31515">"10rem"</span><span style="color:#000000">)</span></div>
<div class="r" style="left:1604.20px;top:0.00px;width:29.80px;height:1300.00px;background:#f3f3f3;"></div>
<div class="r" style="left:1604.20px;top:0.00px;width:29.80px;height:1.50px;background:#f3f3f3;"></div>
<div class="r" style="left:1604.70px;top:1.10px;width:28.50px;height:10.80px;background:#fff;border:2px solid #aaaaaa;box-sizing:border-box;"></div>
<div class="r" style="left:1606.70px;top:13.00px;width:25.00px;height:26.70px;background:#fff;border:2px solid #aaaaaa;box-sizing:border-box;"></div>
<svg class="r" style="left:1613.20px;top:22.20px;" width="12" height="8" viewBox="0 0 12 8"><path d="M0.5 7 H11.5 L6 1 Z" fill="#aaaaaa"/></svg>
<div class="r" style="left:1606.40px;top:235.20px;width:25.60px;height:77.80px;background:#fff;border:2px solid #aaaaaa;box-sizing:border-box;"></div>
<div class="r" style="left:1606.40px;top:1260.20px;width:25.60px;height:29.00px;background:#fff;border:2px solid #aaaaaa;box-sizing:border-box;"></div>
<svg class="r" style="left:1613.20px;top:1270.20px;" width="12" height="8" viewBox="0 0 12 8"><path d="M0.5 1 H11.5 L6 7 Z" fill="#aaaaaa"/></svg>
<div class="r" style="left:1634.00px;top:66.40px;width:14.20px;height:8.60px;background:#800080;"></div>
</div>
<div class="r" style="left:1681.30px;top:170.30px;width:790.00px;height:1340.00px;background:#f9f9f9;border:1.7px solid #c8c8c8;box-sizing:border-box;"></div>
<div class="r" style="left:1683.00px;top:172.30px;width:787.30px;height:41.50px;background:#0077cf;"></div>
<div class="t" style="left:1692.70px;top:182.67px;font-size:20px;line-height:25.0px;color:#ffffff;">Files Manager</div>
<svg class="r" style="left:1837.00px;top:190.00px;" width="536" height="9" viewBox="0 0 536 9"><g fill="#86bfec"><rect x="0.0" y="0" width="1.6" height="1.6"/><rect x="3.5" y="3.5" width="1.6" height="1.6"/><rect x="0.0" y="6.5" width="1.6" height="1.6"/><rect x="7.0" y="0" width="1.6" height="1.6"/><rect x="10.5" y="3.5" width="1.6" height="1.6"/><rect x="7.0" y="6.5" width="1.6" height="1.6"/><rect x="14.1" y="0" width="1.6" height="1.6"/><rect x="17.6" y="3.5" width="1.6" height="1.6"/><rect x="14.1" y="6.5" width="1.6" height="1.6"/><rect x="21.2" y="0" width="1.6" height="1.6"/><rect x="24.7" y="3.5" width="1.6" height="1.6"/><rect x="21.2" y="6.5" width="1.6" height="1.6"/><rect x="28.2" y="0" width="1.6" height="1.6"/><rect x="31.7" y="3.5" width="1.6" height="1.6"/><rect x="28.2" y="6.5" width="1.6" height="1.6"/><rect x="35.2" y="0" width="1.6" height="1.6"/><rect x="38.8" y="3.5" width="1.6" height="1.6"/><rect x="35.2" y="6.5" width="1.6" height="1.6"/><rect x="42.3" y="0" width="1.6" height="1.6"/><rect x="45.8" y="3.5" width="1.6" height="1.6"/><rect x="42.3" y="6.5" width="1.6" height="1.6"/><rect x="49.3" y="0" width="1.6" height="1.6"/><rect x="52.8" y="3.5" width="1.6" height="1.6"/><rect x="49.3" y="6.5" width="1.6" height="1.6"/><rect x="56.4" y="0" width="1.6" height="1.6"/><rect x="59.9" y="3.5" width="1.6" height="1.6"/><rect x="56.4" y="6.5" width="1.6" height="1.6"/><rect x="63.5" y="0" width="1.6" height="1.6"/><rect x="67.0" y="3.5" width="1.6" height="1.6"/><rect x="63.5" y="6.5" width="1.6" height="1.6"/><rect x="70.5" y="0" width="1.6" height="1.6"/><rect x="74.0" y="3.5" width="1.6" height="1.6"/><rect x="70.5" y="6.5" width="1.6" height="1.6"/><rect x="77.5" y="0" width="1.6" height="1.6"/><rect x="81.0" y="3.5" width="1.6" height="1.6"/><rect x="77.5" y="6.5" width="1.6" height="1.6"/><rect x="84.6" y="0" width="1.6" height="1.6"/><rect x="88.1" y="3.5" width="1.6" height="1.6"/><rect x="84.6" y="6.5" width="1.6" height="1.6"/><rect x="91.7" y="0" width="1.6" height="1.6"/><rect x="95.2" y="3.5" width="1.6" height="1.6"/><rect x="91.7" y="6.5" width="1.6" height="1.6"/><rect x="98.7" y="0" width="1.6" height="1.6"/><rect x="102.2" y="3.5" width="1.6" height="1.6"/><rect x="98.7" y="6.5" width="1.6" height="1.6"/><rect x="105.8" y="0" width="1.6" height="1.6"/><rect x="109.2" y="3.5" width="1.6" height="1.6"/><rect x="105.8" y="6.5" width="1.6" height="1.6"/><rect x="112.8" y="0" width="1.6" height="1.6"/><rect x="116.3" y="3.5" width="1.6" height="1.6"/><rect x="112.8" y="6.5" width="1.6" height="1.6"/><rect x="119.8" y="0" width="1.6" height="1.6"/><rect x="123.3" y="3.5" width="1.6" height="1.6"/><rect x="119.8" y="6.5" width="1.6" height="1.6"/><rect x="126.9" y="0" width="1.6" height="1.6"/><rect x="130.4" y="3.5" width="1.6" height="1.6"/><rect x="126.9" y="6.5" width="1.6" height="1.6"/><rect x="134.0" y="0" width="1.6" height="1.6"/><rect x="137.5" y="3.5" width="1.6" height="1.6"/><rect x="134.0" y="6.5" width="1.6" height="1.6"/><rect x="141.0" y="0" width="1.6" height="1.6"/><rect x="144.5" y="3.5" width="1.6" height="1.6"/><rect x="141.0" y="6.5" width="1.6" height="1.6"/><rect x="148.0" y="0" width="1.6" height="1.6"/><rect x="151.5" y="3.5" width="1.6" height="1.6"/><rect x="148.0" y="6.5" width="1.6" height="1.6"/><rect x="155.1" y="0" width="1.6" height="1.6"/><rect x="158.6" y="3.5" width="1.6" height="1.6"/><rect x="155.1" y="6.5" width="1.6" height="1.6"/><rect x="162.2" y="0" width="1.6" height="1.6"/><rect x="165.7" y="3.5" width="1.6" height="1.6"/><rect x="162.2" y="6.5" width="1.6" height="1.6"/><rect x="169.2" y="0" width="1.6" height="1.6"/><rect x="172.7" y="3.5" width="1.6" height="1.6"/><rect x="169.2" y="6.5" width="1.6" height="1.6"/><rect x="176.2" y="0" width="1.6" height="1.6"/><rect x="179.8" y="3.5" width="1.6" height="1.6"/><rect x="176.2" y="6.5" width="1.6" height="1.6"/><rect x="183.3" y="0" width="1.6" height="1.6"/><rect x="186.8" y="3.5" width="1.6" height="1.6"/><rect x="183.3" y="6.5" width="1.6" height="1.6"/><rect x="190.3" y="0" width="1.6" height="1.6"/><rect x="193.8" y="3.5" width="1.6" height="1.6"/><rect x="190.3" y="6.5" width="1.6" height="1.6"/><rect x="197.4" y="0" width="1.6" height="1.6"/><rect x="200.9" y="3.5" width="1.6" height="1.6"/><rect x="197.4" y="6.5" width="1.6" height="1.6"/><rect x="204.5" y="0" width="1.6" height="1.6"/><rect x="208.0" y="3.5" width="1.6" height="1.6"/><rect x="204.5" y="6.5" width="1.6" height="1.6"/><rect x="211.5" y="0" width="1.6" height="1.6"/><rect x="215.0" y="3.5" width="1.6" height="1.6"/><rect x="211.5" y="6.5" width="1.6" height="1.6"/><rect x="218.6" y="0" width="1.6" height="1.6"/><rect x="222.1" y="3.5" width="1.6" height="1.6"/><rect x="218.6" y="6.5" width="1.6" height="1.6"/><rect x="225.6" y="0" width="1.6" height="1.6"/><rect x="229.1" y="3.5" width="1.6" height="1.6"/><rect x="225.6" y="6.5" width="1.6" height="1.6"/><rect x="232.7" y="0" width="1.6" height="1.6"/><rect x="236.2" y="3.5" width="1.6" height="1.6"/><rect x="232.7" y="6.5" width="1.6" height="1.6"/><rect x="239.7" y="0" width="1.6" height="1.6"/><rect x="243.2" y="3.5" width="1.6" height="1.6"/><rect x="239.7" y="6.5" width="1.6" height="1.6"/><rect x="246.8" y="0" width="1.6" height="1.6"/><rect x="250.2" y="3.5" width="1.6" height="1.6"/><rect x="246.8" y="6.5" width="1.6" height="1.6"/><rect x="253.8" y="0" width="1.6" height="1.6"/><rect x="257.3" y="3.5" width="1.6" height="1.6"/><rect x="253.8" y="6.5" width="1.6" height="1.6"/><rect x="260.8" y="0" width="1.6" height="1.6"/><rect x="264.3" y="3.5" width="1.6" height="1.6"/><rect x="260.8" y="6.5" width="1.6" height="1.6"/><rect x="267.9" y="0" width="1.6" height="1.6"/><rect x="271.4" y="3.5" width="1.6" height="1.6"/><rect x="267.9" y="6.5" width="1.6" height="1.6"/><rect x="274.9" y="0" width="1.6" height="1.6"/><rect x="278.4" y="3.5" width="1.6" height="1.6"/><rect x="274.9" y="6.5" width="1.6" height="1.6"/><rect x="282.0" y="0" width="1.6" height="1.6"/><rect x="285.5" y="3.5" width="1.6" height="1.6"/><rect x="282.0" y="6.5" width="1.6" height="1.6"/><rect x="289.1" y="0" width="1.6" height="1.6"/><rect x="292.6" y="3.5" width="1.6" height="1.6"/><rect x="289.1" y="6.5" width="1.6" height="1.6"/><rect x="296.1" y="0" width="1.6" height="1.6"/><rect x="299.6" y="3.5" width="1.6" height="1.6"/><rect x="296.1" y="6.5" width="1.6" height="1.6"/><rect x="303.2" y="0" width="1.6" height="1.6"/><rect x="306.7" y="3.5" width="1.6" height="1.6"/><rect x="303.2" y="6.5" width="1.6" height="1.6"/><rect x="310.2" y="0" width="1.6" height="1.6"/><rect x="313.7" y="3.5" width="1.6" height="1.6"/><rect x="310.2" y="6.5" width="1.6" height="1.6"/><rect x="317.2" y="0" width="1.6" height="1.6"/><rect x="320.8" y="3.5" width="1.6" height="1.6"/><rect x="317.2" y="6.5" width="1.6" height="1.6"/><rect x="324.3" y="0" width="1.6" height="1.6"/><rect x="327.8" y="3.5" width="1.6" height="1.6"/><rect x="324.3" y="6.5" width="1.6" height="1.6"/><rect x="331.3" y="0" width="1.6" height="1.6"/><rect x="334.8" y="3.5" width="1.6" height="1.6"/><rect x="331.3" y="6.5" width="1.6" height="1.6"/><rect x="338.4" y="0" width="1.6" height="1.6"/><rect x="341.9" y="3.5" width="1.6" height="1.6"/><rect x="338.4" y="6.5" width="1.6" height="1.6"/><rect x="345.4" y="0" width="1.6" height="1.6"/><rect x="348.9" y="3.5" width="1.6" height="1.6"/><rect x="345.4" y="6.5" width="1.6" height="1.6"/><rect x="352.5" y="0" width="1.6" height="1.6"/><rect x="356.0" y="3.5" width="1.6" height="1.6"/><rect x="352.5" y="6.5" width="1.6" height="1.6"/><rect x="359.6" y="0" width="1.6" height="1.6"/><rect x="363.1" y="3.5" width="1.6" height="1.6"/><rect x="359.6" y="6.5" width="1.6" height="1.6"/><rect x="366.6" y="0" width="1.6" height="1.6"/><rect x="370.1" y="3.5" width="1.6" height="1.6"/><rect x="366.6" y="6.5" width="1.6" height="1.6"/><rect x="373.7" y="0" width="1.6" height="1.6"/><rect x="377.2" y="3.5" width="1.6" height="1.6"/><rect x="373.7" y="6.5" width="1.6" height="1.6"/><rect x="380.7" y="0" width="1.6" height="1.6"/><rect x="384.2" y="3.5" width="1.6" height="1.6"/><rect x="380.7" y="6.5" width="1.6" height="1.6"/><rect x="387.8" y="0" width="1.6" height="1.6"/><rect x="391.2" y="3.5" width="1.6" height="1.6"/><rect x="387.8" y="6.5" width="1.6" height="1.6"/><rect x="394.8" y="0" width="1.6" height="1.6"/><rect x="398.3" y="3.5" width="1.6" height="1.6"/><rect x="394.8" y="6.5" width="1.6" height="1.6"/><rect x="401.8" y="0" width="1.6" height="1.6"/><rect x="405.3" y="3.5" width="1.6" height="1.6"/><rect x="401.8" y="6.5" width="1.6" height="1.6"/><rect x="408.9" y="0" width="1.6" height="1.6"/><rect x="412.4" y="3.5" width="1.6" height="1.6"/><rect x="408.9" y="6.5" width="1.6" height="1.6"/><rect x="415.9" y="0" width="1.6" height="1.6"/><rect x="419.4" y="3.5" width="1.6" height="1.6"/><rect x="415.9" y="6.5" width="1.6" height="1.6"/><rect x="423.0" y="0" width="1.6" height="1.6"/><rect x="426.5" y="3.5" width="1.6" height="1.6"/><rect x="423.0" y="6.5" width="1.6" height="1.6"/><rect x="430.1" y="0" width="1.6" height="1.6"/><rect x="433.6" y="3.5" width="1.6" height="1.6"/><rect x="430.1" y="6.5" width="1.6" height="1.6"/><rect x="437.1" y="0" width="1.6" height="1.6"/><rect x="440.6" y="3.5" width="1.6" height="1.6"/><rect x="437.1" y="6.5" width="1.6" height="1.6"/><rect x="444.2" y="0" width="1.6" height="1.6"/><rect x="447.7" y="3.5" width="1.6" height="1.6"/><rect x="444.2" y="6.5" width="1.6" height="1.6"/><rect x="451.2" y="0" width="1.6" height="1.6"/><rect x="454.7" y="3.5" width="1.6" height="1.6"/><rect x="451.2" y="6.5" width="1.6" height="1.6"/><rect x="458.2" y="0" width="1.6" height="1.6"/><rect x="461.8" y="3.5" width="1.6" height="1.6"/><rect x="458.2" y="6.5" width="1.6" height="1.6"/><rect x="465.3" y="0" width="1.6" height="1.6"/><rect x="468.8" y="3.5" width="1.6" height="1.6"/><rect x="465.3" y="6.5" width="1.6" height="1.6"/><rect x="472.3" y="0" width="1.6" height="1.6"/><rect x="475.8" y="3.5" width="1.6" height="1.6"/><rect x="472.3" y="6.5" width="1.6" height="1.6"/><rect x="479.4" y="0" width="1.6" height="1.6"/><rect x="482.9" y="3.5" width="1.6" height="1.6"/><rect x="479.4" y="6.5" width="1.6" height="1.6"/><rect x="486.4" y="0" width="1.6" height="1.6"/><rect x="489.9" y="3.5" width="1.6" height="1.6"/><rect x="486.4" y="6.5" width="1.6" height="1.6"/><rect x="493.5" y="0" width="1.6" height="1.6"/><rect x="497.0" y="3.5" width="1.6" height="1.6"/><rect x="493.5" y="6.5" width="1.6" height="1.6"/><rect x="500.6" y="0" width="1.6" height="1.6"/><rect x="504.1" y="3.5" width="1.6" height="1.6"/><rect x="500.6" y="6.5" width="1.6" height="1.6"/><rect x="507.6" y="0" width="1.6" height="1.6"/><rect x="511.1" y="3.5" width="1.6" height="1.6"/><rect x="507.6" y="6.5" width="1.6" height="1.6"/><rect x="514.7" y="0" width="1.6" height="1.6"/><rect x="518.2" y="3.5" width="1.6" height="1.6"/><rect x="514.7" y="6.5" width="1.6" height="1.6"/><rect x="521.7" y="0" width="1.6" height="1.6"/><rect x="525.2" y="3.5" width="1.6" height="1.6"/><rect x="521.7" y="6.5" width="1.6" height="1.6"/><rect x="528.8" y="0" width="1.6" height="1.6"/><rect x="532.2" y="3.5" width="1.6" height="1.6"/><rect x="528.8" y="6.5" width="1.6" height="1.6"/></g></svg>
<svg class="r" style="left:2385.00px;top:192.00px;" width="16" height="9" viewBox="0 0 16 9"><path d="M0.8 0.8 H14.8 L7.8 7.8 Z" fill="#a6cff0"/></svg>
<svg class="r" style="left:2414.00px;top:183.00px;" width="16" height="21" viewBox="0 0 16 21"><path d="M4.5 1.5 H11 M4.5 1.5 V11.5 H11 V1.5 M2 11.5 H13.8 M7.8 11.5 V19.5" fill="none" stroke="#a6cff0" stroke-width="2.2"/></svg>
<svg class="r" style="left:2444.00px;top:184.00px;" width="18" height="18" viewBox="0 0 18 18"><path d="M2 2 L16 16 M16 2 L2 16" stroke="#a6cff0" stroke-width="2.2"/></svg>
<div class="r" style="left:1701.20px;top:223.20px;width:752.40px;height:40.60px;background:#ffffff;border:1.6px solid #9fd3fb;box-sizing:border-box;border-top:2px solid #1a8cf0;"></div>
<div class="r" style="left:1710.00px;top:231.00px;width:1.80px;height:27.80px;background:#000;"></div>
<div class="t" style="left:1712.50px;top:233.57px;font-size:20px;line-height:25.0px;color:#7a7a7a;font-style:italic;">Filter</div>
<svg class="r" style="left:2421.00px;top:233.00px;" width="24" height="22" viewBox="0 0 24 22"><circle cx="13.5" cy="8" r="5.8" fill="none" stroke="#2f62b0" stroke-width="2.4"/><path d="M9.5 12 L3 18.5" stroke="#24477e" stroke-width="2.8" stroke-linecap="round"/></svg>
<div class="r" style="left:1683.20px;top:272.00px;width:787.80px;height:1157.90px;background:#f9f9f9;border:1.8px solid #adadad;box-sizing:border-box;border-right-width:2px;"></div>
<svg class="r" style="left:1697.00px;top:285.00px;" width="15" height="13" viewBox="0 0 15 13"><path d="M13.3 1 V12.2 H1.5 Z" fill="#1e1e1e"/></svg>
<svg class="r" style="left:1720.00px;top:280.00px;" width="34" height="26" viewBox="1720 280 34 26"><path d="M1728.2 294 V287.5 H1733.5 L1736.7 284.1 H1749.2 V302" fill="none" stroke="#e8c486" stroke-width="1.8"/><path d="M1726.1 294.4 H1742.6 L1747.5 302.6 H1729.7 Z" fill="#e8c482"/></svg>
<div class="t" style="left:1761.30px;top:283.47px;font-size:20px;line-height:25.0px;color:#000;">Default Group</div>
<svg class="r" style="left:1763.50px;top:320.90px;" width="18" height="22" viewBox="0 0 18 22"><path d="M12.5 1.5 V13.5 Q12.5 19.5 7.5 19.5 Q3.5 19.5 2.2 16" fill="none" stroke="#dd2a9b" stroke-width="4.4"/></svg>
<div class="t" style="left:1796.00px;top:321.69px;font-size:20.8px;line-height:26.0px;color:#000;">adaeslayout.bjl<span style="margin-left:12.6px;font-style:italic;color:#0000ff;font-size:19.1px">(open designer)</span></div>
<svg class="r" style="left:1763.50px;top:359.93px;" width="18" height="22" viewBox="0 0 18 22"><path d="M12.5 1.5 V13.5 Q12.5 19.5 7.5 19.5 Q3.5 19.5 2.2 16" fill="none" stroke="#dd2a9b" stroke-width="4.4"/></svg>
<div class="t" style="left:1796.00px;top:360.72px;font-size:20.8px;line-height:26.0px;color:#000;">adartboardlayout.bjl<span style="margin-left:12.6px;font-style:italic;color:#0000ff;font-size:19.1px">(open designer)</span></div>
<svg class="r" style="left:1763.50px;top:398.96px;" width="18" height="22" viewBox="0 0 18 22"><path d="M12.5 1.5 V13.5 Q12.5 19.5 7.5 19.5 Q3.5 19.5 2.2 16" fill="none" stroke="#dd2a9b" stroke-width="4.4"/></svg>
<div class="t" style="left:1796.00px;top:399.75px;font-size:20.8px;line-height:26.0px;color:#000;">adbadgelayout.bjl<span style="margin-left:12.6px;font-style:italic;color:#0000ff;font-size:19.1px">(open designer)</span></div>
<svg class="r" style="left:1763.50px;top:437.99px;" width="18" height="22" viewBox="0 0 18 22"><path d="M12.5 1.5 V13.5 Q12.5 19.5 7.5 19.5 Q3.5 19.5 2.2 16" fill="none" stroke="#dd2a9b" stroke-width="4.4"/></svg>
<div class="t" style="left:1796.00px;top:438.78px;font-size:20.8px;line-height:26.0px;color:#000;">adblanklayout.bjl<span style="margin-left:12.6px;font-style:italic;color:#0000ff;font-size:19.1px">(open designer)</span></div>
<svg class="r" style="left:1763.50px;top:477.02px;" width="18" height="22" viewBox="0 0 18 22"><path d="M12.5 1.5 V13.5 Q12.5 19.5 7.5 19.5 Q3.5 19.5 2.2 16" fill="none" stroke="#dd2a9b" stroke-width="4.4"/></svg>
<div class="t" style="left:1796.00px;top:477.81px;font-size:20.8px;line-height:26.0px;color:#000;">adbottomnavlayout.bjl<span style="margin-left:12.6px;font-style:italic;color:#0000ff;font-size:19.1px">(open designer)</span></div>
<svg class="r" style="left:1763.50px;top:516.05px;" width="18" height="22" viewBox="0 0 18 22"><path d="M12.5 1.5 V13.5 Q12.5 19.5 7.5 19.5 Q3.5 19.5 2.2 16" fill="none" stroke="#dd2a9b" stroke-width="4.4"/></svg>
<div class="t" style="left:1796.00px;top:516.84px;font-size:20.8px;line-height:26.0px;color:#000;">adbreadcrumbslayout.bjl<span style="margin-left:12.6px;font-style:italic;color:#0000ff;font-size:19.1px">(open designer)</span></div>
<svg class="r" style="left:1763.50px;top:555.08px;" width="18" height="22" viewBox="0 0 18 22"><path d="M12.5 1.5 V13.5 Q12.5 19.5 7.5 19.5 Q3.5 19.5 2.2 16" fill="none" stroke="#dd2a9b" stroke-width="4.4"/></svg>
<div class="t" style="left:1796.00px;top:555.87px;font-size:20.8px;line-height:26.0px;color:#000;">adbuttongrouplayout.bjl<span style="margin-left:12.6px;font-style:italic;color:#0000ff;font-size:19.1px">(open designer)</span></div>
<svg class="r" style="left:1763.50px;top:594.11px;" width="18" height="22" viewBox="0 0 18 22"><path d="M12.5 1.5 V13.5 Q12.5 19.5 7.5 19.5 Q3.5 19.5 2.2 16" fill="none" stroke="#dd2a9b" stroke-width="4.4"/></svg>
<div class="t" style="left:1796.00px;top:594.90px;font-size:20.8px;line-height:26.0px;color:#000;">adbuttonslayout.bjl<span style="margin-left:12.6px;font-style:italic;color:#0000ff;font-size:19.1px">(open designer)</span></div>
<svg class="r" style="left:1763.50px;top:633.14px;" width="18" height="22" viewBox="0 0 18 22"><path d="M12.5 1.5 V13.5 Q12.5 19.5 7.5 19.5 Q3.5 19.5 2.2 16" fill="none" stroke="#dd2a9b" stroke-width="4.4"/></svg>
<div class="t" style="left:1796.00px;top:633.93px;font-size:20.8px;line-height:26.0px;color:#000;">adcallmebotlayout.bjl<span style="margin-left:12.6px;font-style:italic;color:#0000ff;font-size:19.1px">(open designer)</span></div>
<svg class="r" style="left:1763.50px;top:672.17px;" width="18" height="22" viewBox="0 0 18 22"><path d="M12.5 1.5 V13.5 Q12.5 19.5 7.5 19.5 Q3.5 19.5 2.2 16" fill="none" stroke="#dd2a9b" stroke-width="4.4"/></svg>
<div class="t" style="left:1796.00px;top:672.96px;font-size:20.8px;line-height:26.0px;color:#000;">adcameyolayout.bjl<span style="margin-left:12.6px;font-style:italic;color:#0000ff;font-size:19.1px">(open designer)</span></div>
<svg class="r" style="left:1763.50px;top:711.20px;" width="18" height="22" viewBox="0 0 18 22"><path d="M12.5 1.5 V13.5 Q12.5 19.5 7.5 19.5 Q3.5 19.5 2.2 16" fill="none" stroke="#dd2a9b" stroke-width="4.4"/></svg>
<div class="t" style="left:1796.00px;top:711.99px;font-size:20.8px;line-height:26.0px;color:#000;">adcamlayout.bjl<span style="margin-left:12.6px;font-style:italic;color:#0000ff;font-size:19.1px">(open designer)</span></div>
<svg class="r" style="left:1763.50px;top:750.23px;" width="18" height="22" viewBox="0 0 18 22"><path d="M12.5 1.5 V13.5 Q12.5 19.5 7.5 19.5 Q3.5 19.5 2.2 16" fill="none" stroke="#dd2a9b" stroke-width="4.4"/></svg>
<div class="t" style="left:1796.00px;top:751.02px;font-size:20.8px;line-height:26.0px;color:#000;">adcardlayout.bjl<span style="margin-left:12.6px;font-style:italic;color:#0000ff;font-size:19.1px">(open designer)</span></div>
<svg class="r" style="left:1763.50px;top:789.26px;" width="18" height="22" viewBox="0 0 18 22"><path d="M12.5 1.5 V13.5 Q12.5 19.5 7.5 19.5 Q3.5 19.5 2.2 16" fill="none" stroke="#dd2a9b" stroke-width="4.4"/></svg>
<div class="t" style="left:1796.00px;top:790.05px;font-size:20.8px;line-height:26.0px;color:#000;">adcarousellayout.bjl<span style="margin-left:12.6px;font-style:italic;color:#0000ff;font-size:19.1px">(open designer)</span></div>
<svg class="r" style="left:1763.50px;top:828.29px;" width="18" height="22" viewBox="0 0 18 22"><path d="M12.5 1.5 V13.5 Q12.5 19.5 7.5 19.5 Q3.5 19.5 2.2 16" fill="none" stroke="#dd2a9b" stroke-width="4.4"/></svg>
<div class="t" style="left:1796.00px;top:829.08px;font-size:20.8px;line-height:26.0px;color:#000;">adchatlayout.bjl<span style="margin-left:12.6px;font-style:italic;color:#0000ff;font-size:19.1px">(open designer)</span></div>
<svg class="r" style="left:1763.50px;top:867.32px;" width="18" height="22" viewBox="0 0 18 22"><path d="M12.5 1.5 V13.5 Q12.5 19.5 7.5 19.5 Q3.5 19.5 2.2 16" fill="none" stroke="#dd2a9b" stroke-width="4.4"/></svg>
<div class="t" style="left:1796.00px;top:868.11px;font-size:20.8px;line-height:26.0px;color:#000;">adcheckboxlayout.bjl<span style="margin-left:12.6px;font-style:italic;color:#0000ff;font-size:19.1px">(open designer)</span></div>
<svg class="r" style="left:1763.50px;top:906.35px;" width="18" height="22" viewBox="0 0 18 22"><path d="M12.5 1.5 V13.5 Q12.5 19.5 7.5 19.5 Q3.5 19.5 2.2 16" fill="none" stroke="#dd2a9b" stroke-width="4.4"/></svg>
<div class="t" style="left:1796.00px;top:907.14px;font-size:20.8px;line-height:26.0px;color:#000;">adclientslayout.bjl<span style="margin-left:12.6px;font-style:italic;color:#0000ff;font-size:19.1px">(open designer)</span></div>
<svg class="r" style="left:1763.50px;top:945.38px;" width="18" height="22" viewBox="0 0 18 22"><path d="M12.5 1.5 V13.5 Q12.5 19.5 7.5 19.5 Q3.5 19.5 2.2 16" fill="none" stroke="#dd2a9b" stroke-width="4.4"/></svg>
<div class="t" style="left:1796.00px;top:946.17px;font-size:20.8px;line-height:26.0px;color:#000;">adcollapselayout.bjl<span style="margin-left:12.6px;font-style:italic;color:#0000ff;font-size:19.1px">(open designer)</span></div>
<svg class="r" style="left:1763.50px;top:984.41px;" width="18" height="22" viewBox="0 0 18 22"><path d="M12.5 1.5 V13.5 Q12.5 19.5 7.5 19.5 Q3.5 19.5 2.2 16" fill="none" stroke="#dd2a9b" stroke-width="4.4"/></svg>
<div class="t" style="left:1796.00px;top:985.20px;font-size:20.8px;line-height:26.0px;color:#000;">addatepickerlayout.bjl<span style="margin-left:12.6px;font-style:italic;color:#0000ff;font-size:19.1px">(open designer)</span></div>
<svg class="r" style="left:1763.50px;top:1023.44px;" width="18" height="22" viewBox="0 0 18 22"><path d="M12.5 1.5 V13.5 Q12.5 19.5 7.5 19.5 Q3.5 19.5 2.2 16" fill="none" stroke="#dd2a9b" stroke-width="4.4"/></svg>
<div class="t" style="left:1796.00px;top:1024.23px;font-size:20.8px;line-height:26.0px;color:#000;">addevicelayout.bjl<span style="margin-left:12.6px;font-style:italic;color:#0000ff;font-size:19.1px">(open designer)</span></div>
<svg class="r" style="left:1763.50px;top:1062.47px;" width="18" height="22" viewBox="0 0 18 22"><path d="M12.5 1.5 V13.5 Q12.5 19.5 7.5 19.5 Q3.5 19.5 2.2 16" fill="none" stroke="#dd2a9b" stroke-width="4.4"/></svg>
<div class="t" style="left:1796.00px;top:1063.26px;font-size:20.8px;line-height:26.0px;color:#000;">addividerlayout.bjl<span style="margin-left:12.6px;font-style:italic;color:#0000ff;font-size:19.1px">(open designer)</span></div>
<svg class="r" style="left:1763.50px;top:1101.50px;" width="18" height="22" viewBox="0 0 18 22"><path d="M12.5 1.5 V13.5 Q12.5 19.5 7.5 19.5 Q3.5 19.5 2.2 16" fill="none" stroke="#dd2a9b" stroke-width="4.4"/></svg>
<div class="t" style="left:1796.00px;top:1102.29px;font-size:20.8px;line-height:26.0px;color:#000;">addropdownlayout.bjl<span style="margin-left:12.6px;font-style:italic;color:#0000ff;font-size:19.1px">(open designer)</span></div>
<svg class="r" style="left:1763.50px;top:1140.53px;" width="18" height="22" viewBox="0 0 18 22"><path d="M12.5 1.5 V13.5 Q12.5 19.5 7.5 19.5 Q3.5 19.5 2.2 16" fill="none" stroke="#dd2a9b" stroke-width="4.4"/></svg>
<div class="t" style="left:1796.00px;top:1141.32px;font-size:20.8px;line-height:26.0px;color:#000;">adeditorlayout.bjl<span style="margin-left:12.6px;font-style:italic;color:#0000ff;font-size:19.1px">(open designer)</span></div>
<svg class="r" style="left:1763.50px;top:1179.56px;" width="18" height="22" viewBox="0 0 18 22"><path d="M12.5 1.5 V13.5 Q12.5 19.5 7.5 19.5 Q3.5 19.5 2.2 16" fill="none" stroke="#dd2a9b" stroke-width="4.4"/></svg>
<div class="t" style="left:1796.00px;top:1180.35px;font-size:20.8px;line-height:26.0px;color:#000;">ademailjslayout.bjl<span style="margin-left:12.6px;font-style:italic;color:#0000ff;font-size:19.1px">(open designer)</span></div>
<svg class="r" style="left:1763.50px;top:1218.59px;" width="18" height="22" viewBox="0 0 18 22"><path d="M12.5 1.5 V13.5 Q12.5 19.5 7.5 19.5 Q3.5 19.5 2.2 16" fill="none" stroke="#dd2a9b" stroke-width="4.4"/></svg>
<div class="t" style="left:1796.00px;top:1219.38px;font-size:20.8px;line-height:26.0px;color:#000;">adevolayout.bjl<span style="margin-left:12.6px;font-style:italic;color:#0000ff;font-size:19.1px">(open designer)</span></div>
<svg class="r" style="left:1763.50px;top:1257.62px;" width="18" height="22" viewBox="0 0 18 22"><path d="M12.5 1.5 V13.5 Q12.5 19.5 7.5 19.5 Q3.5 19.5 2.2 16" fill="none" stroke="#dd2a9b" stroke-width="4.4"/></svg>
<div class="t" style="left:1796.00px;top:1258.41px;font-size:20.8px;line-height:26.0px;color:#000;">adfileinputlayout.bjl<span style="margin-left:12.6px;font-style:italic;color:#0000ff;font-size:19.1px">(open designer)</span></div>
<svg class="r" style="left:1763.50px;top:1296.65px;" width="18" height="22" viewBox="0 0 18 22"><path d="M12.5 1.5 V13.5 Q12.5 19.5 7.5 19.5 Q3.5 19.5 2.2 16" fill="none" stroke="#dd2a9b" stroke-width="4.4"/></svg>
<div class="t" style="left:1796.00px;top:1297.44px;font-size:20.8px;line-height:26.0px;color:#000;">adfluidmeterlayout.bjl<span style="margin-left:12.6px;font-style:italic;color:#0000ff;font-size:19.1px">(open designer)</span></div>
<svg class="r" style="left:1763.50px;top:1335.68px;" width="18" height="22" viewBox="0 0 18 22"><path d="M12.5 1.5 V13.5 Q12.5 19.5 7.5 19.5 Q3.5 19.5 2.2 16" fill="none" stroke="#dd2a9b" stroke-width="4.4"/></svg>
<div class="t" style="left:1796.00px;top:1336.47px;font-size:20.8px;line-height:26.0px;color:#000;">adfooterlayout.bjl<span style="margin-left:12.6px;font-style:italic;color:#0000ff;font-size:19.1px">(open designer)</span></div>
<svg class="r" style="left:1763.50px;top:1374.71px;" width="18" height="22" viewBox="0 0 18 22"><path d="M12.5 1.5 V13.5 Q12.5 19.5 7.5 19.5 Q3.5 19.5 2.2 16" fill="none" stroke="#dd2a9b" stroke-width="4.4"/></svg>
<div class="t" style="left:1796.00px;top:1375.50px;font-size:20.8px;line-height:26.0px;color:#000;">adfrappeganttlayout.bjl<span style="margin-left:12.6px;font-style:italic;color:#0000ff;font-size:19.1px">(open designer)</span></div>
<svg class="r" style="left:1763.50px;top:1413.74px;" width="18" height="22" viewBox="0 0 18 22"><path d="M12.5 1.5 V13.5 Q12.5 19.5 7.5 19.5 Q3.5 19.5 2.2 16" fill="none" stroke="#dd2a9b" stroke-width="4.4"/></svg>
<div class="t" style="left:1796.00px;top:1414.53px;font-size:20.8px;line-height:26.0px;color:#000;">adfullcalendarlayout.bjl<span style="margin-left:12.6px;font-style:italic;color:#0000ff;font-size:19.1px">(open designer)</span></div>
<div class="r" style="left:1683.00px;top:1429.90px;width:786.60px;height:78.70px;background:#f9f9f9;"></div>
<div class="r" style="left:1683.20px;top:1427.90px;width:787.80px;height:2.00px;background:#adadad;"></div>
<div class="r" style="left:2439.00px;top:273.80px;width:30.00px;height:1154.10px;background:#f2f2f2;"></div>
<div class="r" style="left:2441.30px;top:274.20px;width:25.50px;height:27.20px;background:#fff;border:2px solid #aaaaaa;box-sizing:border-box;"></div>
<svg class="r" style="left:2448.00px;top:284.00px;" width="12" height="8" viewBox="0 0 12 8"><path d="M0.5 7 H11.5 L6 1 Z" fill="#aaaaaa"/></svg>
<div class="r" style="left:2441.30px;top:304.00px;width:25.50px;height:104.70px;background:#fff;border:2px solid #aaaaaa;box-sizing:border-box;"></div>
<div class="r" style="left:2441.30px;top:1400.70px;width:25.50px;height:26.70px;background:#fff;border:2px solid #aaaaaa;box-sizing:border-box;"></div>
<svg class="r" style="left:2448.00px;top:1409.50px;" width="12" height="8" viewBox="0 0 12 8"><path d="M0.5 1 H11.5 L6 7 Z" fill="#aaaaaa"/></svg>
<div class="r" style="left:1709.30px;top:1448.60px;width:97.30px;height:42.90px;background:linear-gradient(#efefef,#e3e3e3);border:2px solid #a8a8a8;box-sizing:border-box;"></div>
<div class="t" style="left:1716.25px;top:1459.47px;font-size:20px;line-height:25.0px;color:#000;">Add Files</div>
<div class="r" style="left:1833.30px;top:1448.60px;width:87.20px;height:42.90px;background:linear-gradient(#efefef,#e3e3e3);border:2px solid #a8a8a8;box-sizing:border-box;"></div>
<div class="t" style="left:1838.00px;top:1459.47px;font-size:20px;line-height:25.0px;color:#000;">Remove</div>
<div class="r" style="left:1947.30px;top:1448.60px;width:55.30px;height:42.90px;background:linear-gradient(#efefef,#e3e3e3);border:2px solid #a8a8a8;box-sizing:border-box;"></div>
<div class="t" style="left:1952.15px;top:1459.47px;font-size:20px;line-height:25.0px;color:#000;">Sync</div>
<div class="r" style="left:1681.30px;top:1508.60px;width:790.00px;height:1.70px;background:#cccccc;"></div>
<div class="r" style="left:1953.30px;top:1509.00px;width:133.50px;height:38.00px;background:#ffffff;"></div>
<div class="r" style="left:2086.80px;top:1509.00px;width:1.40px;height:38.00px;background:#cccccc;"></div>
<div class="r" style="left:1952.30px;top:1509.00px;width:1.30px;height:38.00px;background:#d4d4d4;"></div>
<svg class="r" style="left:1696.00px;top:1518.00px;" width="20" height="20" viewBox="0 0 20 20"><rect x="1" y="1" width="7" height="7" fill="#3a3a3a"/><rect x="11" y="1" width="7" height="7" fill="#3a3a3a"/><rect x="1" y="11" width="17" height="7" fill="#3a3a3a"/></svg>
<div class="t" style="left:1730.40px;top:1518.47px;font-size:20px;line-height:25.0px;color:#333333;">Modu...</div>
<svg class="r" style="left:1824.00px;top:1517.00px;" width="27" height="22" viewBox="0 0 27 22"><path d="M1.5 2 H10.5 Q13 2 13 5 V20 Q13 17.5 10.5 17.5 H1.5 Z M24.5 2 H15.5 Q13 2 13 5 V20 Q13 17.5 15.5 17.5 H24.5 Z" fill="none" stroke="#3a3a3a" stroke-width="2"/></svg>
<div class="t" style="left:1861.30px;top:1518.47px;font-size:20px;line-height:25.0px;color:#333333;">Librari...</div>
<svg class="r" style="left:1966.00px;top:1517.00px;" width="25" height="21" viewBox="0 0 25 21"><rect x="0.8" y="2" width="22.6" height="18.5" fill="#dcb77d"/><rect x="10.5" y="2.5" width="11.5" height="2.6" fill="#fff"/></svg>
<div class="t" style="left:2001.60px;top:1518.47px;font-size:20px;line-height:25.0px;color:#1a6fc0;">Files...</div>
<svg class="r" style="left:2100.00px;top:1515.00px;" width="28" height="27" viewBox="0 0 28 27"><rect x="1.6" y="1.6" width="24.5" height="3" fill="#3a3a3a"/><rect x="1.6" y="8.3" width="17.5" height="3" fill="#3a3a3a"/><rect x="1.6" y="15" width="21" height="3" fill="#3a3a3a"/><rect x="1.6" y="21.5" width="12" height="3" fill="#3a3a3a"/></svg>
<div class="t" style="left:2137.80px;top:1518.37px;font-size:20px;line-height:25.0px;color:#333333;">Logs</div>
<svg class="r" style="left:2203.00px;top:1515.00px;" width="26" height="27" viewBox="0 0 26 27"><circle cx="15.5" cy="9.5" r="6.2" fill="none" stroke="#3a3a3a" stroke-width="2.6"/><path d="M11 14 L3.5 21.5" stroke="#3a3a3a" stroke-width="3.4" stroke-linecap="round"/></svg>
<div class="t" style="left:2238.70px;top:1518.37px;font-size:20px;line-height:25.0px;color:#333333;">Quick...</div>
<svg class="r" style="left:2338.00px;top:1518.00px;" width="22" height="23" viewBox="0 0 22 23"><rect x="4.5" y="1" width="8.5" height="3.5" fill="#3a3a3a"/><rect x="15" y="1" width="3.6" height="8.5" fill="#3a3a3a"/><circle cx="8.5" cy="11.5" r="3.8" fill="none" stroke="#2f6fb5" stroke-width="2"/><path d="M5.8 14.5 L1.8 19" stroke="#2f6fb5" stroke-width="2.4" stroke-linecap="round"/></svg>
<div class="t" style="left:2373.20px;top:1518.37px;font-size:20px;line-height:25.0px;color:#333333;">Find All...</div>
<div class="r" style="left:5.00px;top:1559.60px;width:2478.00px;height:42.40px;background:#0077cf;"></div><div class="t" style="left:24.50px;top:1570.37px;font-size:20px;line-height:25.0px;color:#ffffff;">B4J-Bridge: Disconnected</div>
</body></html>
